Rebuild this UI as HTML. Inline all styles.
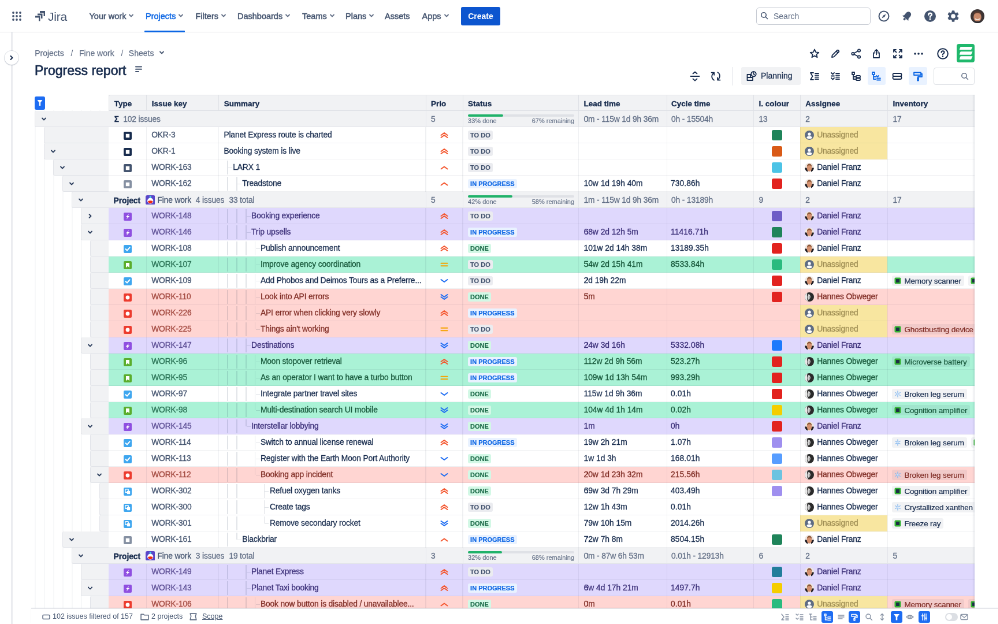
<!DOCTYPE html><html><head><meta charset="utf-8"><title>Progress report</title><style>
*{box-sizing:border-box}
html,body{margin:0;padding:0;width:998px;height:624px;overflow:hidden;background:#fff}
#root{will-change:transform;position:absolute;left:0;top:0;width:1728px;height:1080px;transform:scale(0.5777);transform-origin:0 0;font-family:"Liberation Sans",sans-serif;color:#172b4d;font-size:14px;overflow:hidden;background:#fff}
.a{position:absolute}
.t{position:absolute;white-space:nowrap;line-height:28px;font-size:13.8px;letter-spacing:-0.15px;-webkit-text-stroke:0.3px currentColor}
.lz{display:inline-block;font-size:11px;font-weight:bold;line-height:16px;height:16px;padding:0 4px;border-radius:3px;vertical-align:middle;-webkit-text-stroke:0.2px currentColor}
.nav{position:absolute;top:0;height:56px;line-height:57px;font-size:14.5px;color:#44546f;white-space:nowrap;-webkit-text-stroke:0.5px currentColor}
.ic{position:absolute;display:block}
</style></head><body><div id="root">
<div class="a" style="left:0;top:55px;width:1728px;height:1px;background:#dcdfe4"></div>
<svg class="ic" style="left:21px;top:19.5px" width="16" height="16" viewBox="0 0 16 16"><circle cx="2" cy="2" r="1.9" fill="#44546f"/><circle cx="2" cy="8" r="1.9" fill="#44546f"/><circle cx="2" cy="14" r="1.9" fill="#44546f"/><circle cx="8" cy="2" r="1.9" fill="#44546f"/><circle cx="8" cy="8" r="1.9" fill="#44546f"/><circle cx="8" cy="14" r="1.9" fill="#44546f"/><circle cx="14" cy="2" r="1.9" fill="#44546f"/><circle cx="14" cy="8" r="1.9" fill="#44546f"/><circle cx="14" cy="14" r="1.9" fill="#44546f"/></svg>
<svg class="ic" style="left:60px;top:18px" width="19" height="20" viewBox="0 0 19 20"><g fill="#44546f"><path d="M9 1 H18 V10 L15.5 10 V4.5 L9 4.5 Z"/><path d="M5 5.5 H13.5 V14 L11 14 V8.5 L5 8.5 Z"/><path d="M1 9.5 H9.5 V18.5 L7 18.5 V12.5 L1 12.5 Z"/></g></svg>
<div class="a" style="left:83px;top:0;height:56px;line-height:57px;font-size:21px;color:#44546f;letter-spacing:-0.2px">Jira</div>
<div class="nav" style="left:154.5px;color:#44546f">Your work<span style="display:inline-block;vertical-align:middle;margin-left:3px;position:relative;top:-1px"><svg width="12" height="12" viewBox="0 0 12 12"><path d="M3 4.5 L6 7.5 L9 4.5" fill="none" stroke="#626f86" stroke-width="1.8" stroke-linecap="round" stroke-linejoin="round"/></svg></span></div>
<div class="nav" style="left:252px;color:#0c66e4">Projects<span style="display:inline-block;vertical-align:middle;margin-left:3px;position:relative;top:-1px"><svg width="12" height="12" viewBox="0 0 12 12"><path d="M3 4.5 L6 7.5 L9 4.5" fill="none" stroke="#626f86" stroke-width="1.8" stroke-linecap="round" stroke-linejoin="round"/></svg></span></div>
<div class="nav" style="left:338.5px;color:#44546f">Filters<span style="display:inline-block;vertical-align:middle;margin-left:3px;position:relative;top:-1px"><svg width="12" height="12" viewBox="0 0 12 12"><path d="M3 4.5 L6 7.5 L9 4.5" fill="none" stroke="#626f86" stroke-width="1.8" stroke-linecap="round" stroke-linejoin="round"/></svg></span></div>
<div class="nav" style="left:411px;color:#44546f">Dashboards<span style="display:inline-block;vertical-align:middle;margin-left:3px;position:relative;top:-1px"><svg width="12" height="12" viewBox="0 0 12 12"><path d="M3 4.5 L6 7.5 L9 4.5" fill="none" stroke="#626f86" stroke-width="1.8" stroke-linecap="round" stroke-linejoin="round"/></svg></span></div>
<div class="nav" style="left:523px;color:#44546f">Teams<span style="display:inline-block;vertical-align:middle;margin-left:3px;position:relative;top:-1px"><svg width="12" height="12" viewBox="0 0 12 12"><path d="M3 4.5 L6 7.5 L9 4.5" fill="none" stroke="#626f86" stroke-width="1.8" stroke-linecap="round" stroke-linejoin="round"/></svg></span></div>
<div class="nav" style="left:598px;color:#44546f">Plans<span style="display:inline-block;vertical-align:middle;margin-left:3px;position:relative;top:-1px"><svg width="12" height="12" viewBox="0 0 12 12"><path d="M3 4.5 L6 7.5 L9 4.5" fill="none" stroke="#626f86" stroke-width="1.8" stroke-linecap="round" stroke-linejoin="round"/></svg></span></div>
<div class="nav" style="left:666px;color:#44546f">Assets<span style="display:inline-block;vertical-align:middle;margin-left:3px;position:relative;top:-1px"></span></div>
<div class="nav" style="left:730.5px;color:#44546f">Apps<span style="display:inline-block;vertical-align:middle;margin-left:3px;position:relative;top:-1px"><svg width="12" height="12" viewBox="0 0 12 12"><path d="M3 4.5 L6 7.5 L9 4.5" fill="none" stroke="#626f86" stroke-width="1.8" stroke-linecap="round" stroke-linejoin="round"/></svg></span></div>
<div class="a" style="left:250px;top:52.5px;width:70px;height:3.5px;background:#0c66e4;border-radius:1px"></div>
<div class="a" style="left:798px;top:12px;width:68px;height:32px;background:#0c55cf;border-radius:3px;color:#fff;font-weight:bold;font-size:14px;line-height:32px;text-align:center">Create</div>
<div class="a" style="left:1309px;top:12.5px;width:198px;height:30px;border:1.5px solid #c8ccd4;border-radius:5px;background:#fff"></div>
<svg class="ic" style="left:1316px;top:20px" width="14" height="14" viewBox="0 0 14 14"><circle cx="6" cy="6" r="4.2" fill="none" stroke="#44546f" stroke-width="1.6"/><path d="M9.2 9.2 L12.5 12.5" stroke="#44546f" stroke-width="1.6" stroke-linecap="round"/></svg>
<div class="a" style="left:1339px;top:12px;line-height:32px;font-size:14px;color:#626f86">Search</div>
<svg class="ic" style="left:1519px;top:17px" width="22" height="22" viewBox="0 0 22 22"><circle cx="11" cy="11" r="8.5" fill="none" stroke="#44546f" stroke-width="2"/><path d="M14.5 7.5 L12.3 12.3 L7.5 14.5 L9.7 9.7 Z" fill="#44546f"/></svg>
<svg class="ic" style="left:1559px;top:17px" width="22" height="22" viewBox="0 0 22 22"><g transform="rotate(40 11 11)" fill="#44546f"><path d="M11 2.5 C7.6 2.5 6.2 5.2 6.2 8.6 V12.6 L4.2 15.6 H17.8 L15.8 12.6 V8.6 C15.8 5.2 14.4 2.5 11 2.5 Z"/><circle cx="11" cy="17.8" r="2"/></g></svg>
<svg class="ic" style="left:1599px;top:17px" width="22" height="22" viewBox="0 0 22 22"><circle cx="11" cy="11" r="10" fill="#44546f"/><path d="M8.2 8.6 Q8.3 5.8 11 5.8 Q13.8 5.8 13.8 8.3 Q13.8 10 11.8 10.9 Q11 11.3 11 12.6" fill="none" stroke="#fff" stroke-width="2.6" stroke-linecap="round"/><circle cx="11" cy="16" r="1.6" fill="#fff"/></svg>
<svg class="ic" style="left:1639px;top:17px" width="22" height="22" viewBox="0 0 22 22"><g fill="#44546f"><rect x="8.6" y="1.2" width="4.8" height="5" rx="1" transform="rotate(0 11 11)"/><rect x="8.6" y="1.2" width="4.8" height="5" rx="1" transform="rotate(60 11 11)"/><rect x="8.6" y="1.2" width="4.8" height="5" rx="1" transform="rotate(120 11 11)"/><rect x="8.6" y="1.2" width="4.8" height="5" rx="1" transform="rotate(180 11 11)"/><rect x="8.6" y="1.2" width="4.8" height="5" rx="1" transform="rotate(240 11 11)"/><rect x="8.6" y="1.2" width="4.8" height="5" rx="1" transform="rotate(300 11 11)"/><circle cx="11" cy="11" r="7.3"/></g><circle cx="11" cy="11" r="3.8" fill="#fff"/></svg>
<svg class="ic" style="left:1680px;top:15.5px" width="24" height="24" viewBox="0 0 24 24"><defs><clipPath id="avc"><circle cx="12" cy="12" r="12"/></clipPath></defs><g clip-path="url(#avc)"><rect width="24" height="24" fill="#3d3434"/><ellipse cx="12" cy="13.5" rx="6.8" ry="8" fill="#c98a6b"/><path d="M4.8 9.5 Q5.5 3.5 12 3.5 Q18.5 3.5 19.2 9.5 Q16 6.5 12 6.8 Q8 6.5 4.8 9.5Z" fill="#5b3b2e"/><path d="M8 16.5 Q12 19.5 16 16.5" stroke="#f3e6de" stroke-width="1.6" fill="none"/><rect x="0" y="21" width="24" height="3" fill="#2a2a30"/></g></svg>
<div class="a" style="left:19.2px;top:56px;width:3.2px;height:1024px;background:#ebecf0"></div>
<div class="a" style="left:8px;top:87.5px;width:24px;height:24px;border-radius:50%;background:#fff;box-shadow:0 0 0 1px rgba(9,30,66,0.1),0 1px 2px rgba(9,30,66,0.2)"></div>
<svg class="ic" style="left:14px;top:93.5px" width="12" height="12" viewBox="0 0 12 12"><path d="M4.5 3 L7.5 6 L4.5 9" fill="none" stroke="#172b4d" stroke-width="2" stroke-linecap="round" stroke-linejoin="round"/></svg>
<div class="a" style="left:60.2px;top:77.7px;line-height:28px;font-size:14px;color:#626f86;white-space:nowrap;-webkit-text-stroke:0.25px #626f86">Projects</div>
<div class="a" style="left:122.5px;top:77.7px;line-height:28px;font-size:14px;color:#626f86">/</div>
<div class="a" style="left:137px;top:77.7px;line-height:28px;font-size:14px;color:#626f86;white-space:nowrap;-webkit-text-stroke:0.25px #626f86">Fine work</div>
<div class="a" style="left:209.5px;top:77.7px;line-height:28px;font-size:14px;color:#626f86">/</div>
<div class="a" style="left:222.8px;top:77.7px;line-height:28px;font-size:14px;color:#626f86;white-space:nowrap;-webkit-text-stroke:0.25px #626f86">Sheets</div>
<svg class="ic" style="left:274px;top:85px" width="12" height="12" viewBox="0 0 12 12"><path d="M3 4.5 L6 7.5 L9 4.5" fill="none" stroke="#44546f" stroke-width="1.8" stroke-linecap="round" stroke-linejoin="round"/></svg>
<div class="a" style="left:60px;top:106px;line-height:32px;font-size:23px;color:#172b4d;white-space:nowrap;-webkit-text-stroke:0.7px #172b4d">Progress report</div>
<svg class="ic" style="left:234px;top:114px" width="13" height="12" viewBox="0 0 13 12"><g fill="#44546f"><rect x="0" y="0.5" width="12" height="2" rx="1"/><rect x="0" y="4.7" width="12" height="2" rx="1"/><rect x="0" y="8.9" width="7" height="2" rx="1"/></g></svg>
<svg class="ic" style="left:1399.6px;top:82.6px" width="20" height="20" viewBox="0 0 20 20"><path d="M10 2.5 L12.2 7.3 L17.3 7.8 L13.4 11.2 L14.6 16.3 L10 13.6 L5.4 16.3 L6.6 11.2 L2.7 7.8 L7.8 7.3 Z" fill="none" stroke="#172b4d" stroke-width="1.8" stroke-linecap="round" stroke-linejoin="round"/></svg>
<svg class="ic" style="left:1435.9px;top:82.6px" width="20" height="20" viewBox="0 0 20 20"><path d="M4 16 L4.6 12.6 L13 4.2 Q14.2 3 15.4 4.2 L15.8 4.6 Q17 5.8 15.8 7 L7.4 15.4 Z M11.6 5.6 L14.4 8.4" fill="none" stroke="#172b4d" stroke-width="1.8" stroke-linecap="round" stroke-linejoin="round"/></svg>
<svg class="ic" style="left:1471.8px;top:82.6px" width="20" height="20" viewBox="0 0 20 20"><circle cx="15" cy="4.5" r="2.2" fill="none" stroke="#172b4d" stroke-width="1.8" stroke-linecap="round" stroke-linejoin="round"/><circle cx="15" cy="15.5" r="2.2" fill="none" stroke="#172b4d" stroke-width="1.8" stroke-linecap="round" stroke-linejoin="round"/><circle cx="4.5" cy="10" r="2.2" fill="none" stroke="#172b4d" stroke-width="1.8" stroke-linecap="round" stroke-linejoin="round"/><path d="M6.5 9 L13 5.5 M6.5 11 L13 14.5" fill="none" stroke="#172b4d" stroke-width="1.8" stroke-linecap="round" stroke-linejoin="round"/></svg>
<svg class="ic" style="left:1507.0px;top:82.6px" width="20" height="20" viewBox="0 0 20 20"><path d="M10 11.5 V2.8 M7 5.8 L10 2.8 L13 5.8 M7.5 8.5 H5 V17 H15 V8.5 H12.5" fill="none" stroke="#172b4d" stroke-width="1.8" stroke-linecap="round" stroke-linejoin="round"/></svg>
<svg class="ic" style="left:1543.8px;top:82.6px" width="20" height="20" viewBox="0 0 20 20"><path d="M3 7 V3 H7 M13 3 H17 V7 M17 13 V17 H13 M7 17 H3 V13 M3.5 3.5 L7.5 7.5 M16.5 3.5 L12.5 7.5 M16.5 16.5 L12.5 12.5 M3.5 16.5 L7.5 12.5" fill="none" stroke="#172b4d" stroke-width="1.8" stroke-linecap="round" stroke-linejoin="round"/></svg>
<svg class="ic" style="left:1580.0px;top:82.6px" width="20" height="20" viewBox="0 0 20 20"><circle cx="4" cy="10" r="1.8" fill="#172b4d"/><circle cx="10" cy="10" r="1.8" fill="#172b4d"/><circle cx="16" cy="10" r="1.8" fill="#172b4d"/></svg>
<svg class="ic" style="left:1620.5px;top:81.6px" width="22" height="22" viewBox="0 0 20 20"><circle cx="10" cy="10" r="8" fill="none" stroke="#172b4d" stroke-width="1.8" stroke-linecap="round" stroke-linejoin="round"/><path d="M7.7 8 Q7.8 5.6 10 5.6 Q12.3 5.6 12.3 7.7 Q12.3 9.2 10.6 9.9 Q10 10.2 10 11.5" fill="none" stroke="#172b4d" stroke-width="1.8" stroke-linecap="round" stroke-linejoin="round"/><circle cx="10" cy="14.3" r="1.1" fill="#172b4d"/></svg>
<div class="a" style="left:1656px;top:76.2px;width:31px;height:32px;background:#1fb86c;border-radius:4px"></div>
<svg class="ic" style="left:1656px;top:76.2px" width="31" height="32" viewBox="0 0 31 32"><g fill="#fff"><path d="M7.5 5 H27.5 L25 10.2 H5.5 Q4.5 10.2 5 9 L6.2 6 Q6.6 5 7.5 5Z"/><path d="M7.5 13.3 H27.5 L25 18.7 H5.5 Q4.5 18.7 5 17.5 L6.2 14.3 Q6.6 13.3 7.5 13.3Z"/><path d="M7.5 21.3 H27.5 L25 27 H5.5 Q4.5 27 5 25.8 L6.2 22.3 Q6.6 21.3 7.5 21.3Z"/></g></svg>
<svg class="ic" style="left:1192.5px;top:122.1px" width="20" height="20" viewBox="0 0 20 20"><path d="M2.5 10 H17.5 M6.5 5.5 L10 2.5 L13.5 5.5 M6.5 14.5 L10 17.5 L13.5 14.5" fill="none" stroke="#172b4d" stroke-width="1.8" stroke-linecap="round" stroke-linejoin="round"/></svg>
<svg class="ic" style="left:1228.9px;top:122.1px" width="20" height="20" viewBox="0 0 20 20"><path d="M6.6 4.2 Q3 7 3.2 11 Q3.6 14.6 7 16.8 M2.6 3.6 H7.2 V7.8 M13.4 3.2 Q17 5.4 16.9 9.6 Q16.7 13.6 13.2 16.2 M13 12.4 V16.6 H17.6" fill="none" stroke="#172b4d" stroke-width="1.8" stroke-linecap="round" stroke-linejoin="round"/></svg>
<div class="a" style="left:1267.5px;top:116px;width:1.5px;height:31.5px;background:#dcdfe4"></div>
<div class="a" style="left:1283px;top:116px;width:102.5px;height:31px;background:#f1f2f4;border-radius:3px"></div>
<svg class="ic" style="left:1290.7px;top:122.1px" width="20" height="20" viewBox="0 0 20 20"><path d="M2.5 7 H8 V12 H2.5 Z M2.5 12 V17 H12 V12 H8 M13.5 1.8 A4.3 4.3 0 1 1 13.49 1.8 M13.5 4 V6.3 L15 7.3" fill="none" stroke="#172b4d" stroke-width="1.8" stroke-linecap="round" stroke-linejoin="round"/></svg>
<div class="a" style="left:1317px;top:116px;line-height:31px;font-size:14px;color:#172b4d;-webkit-text-stroke:0.3px #172b4d">Planning</div>
<svg class="ic" style="left:1399.6px;top:122.1px" width="20" height="20" viewBox="0 0 20 20"><path d="M8 4 H3 L6.5 10 L3 16 H8 M11 5 H17 M11 8.3 H17 M11 11.6 H17 M11 15 H17" fill="none" stroke="#172b4d" stroke-width="1.8" stroke-linecap="round" stroke-linejoin="round"/></svg>
<svg class="ic" style="left:1435.9px;top:122.1px" width="20" height="20" viewBox="0 0 20 20"><path d="M3 4 L5.5 6.5 L8 4 M3 13 L5.5 15.5 L8 13 M3 9.5 H8 M11 5 H17 M11 8.3 H17 M11 11.6 H17 M11 15 H17" fill="none" stroke="#172b4d" stroke-width="1.8" stroke-linecap="round" stroke-linejoin="round"/></svg>
<svg class="ic" style="left:1471.8px;top:122.1px" width="20" height="20" viewBox="0 0 20 20"><path d="M3 3 H7 V7 H3 Z M5 7 V15 H9 M5 11 H9" fill="none" stroke="#172b4d" stroke-width="1.8" stroke-linecap="round" stroke-linejoin="round"/><rect x="10" y="9" width="7" height="3.5" rx="1" fill="none" stroke="#172b4d" stroke-width="1.8" stroke-linecap="round" stroke-linejoin="round"/><rect x="10" y="13.5" width="7" height="3.5" rx="1" fill="none" stroke="#172b4d" stroke-width="1.8" stroke-linecap="round" stroke-linejoin="round"/></svg>
<div class="a" style="left:1501.6px;top:116.3px;width:31.4px;height:31.2px;background:#e9f2ff;border-radius:3px"></div>
<svg class="ic" style="left:1507.0px;top:122.1px" width="20" height="20" viewBox="0 0 20 20"><path d="M3 3 H7 V7 H3 Z M5 7 V15 H9 M5 11 H9 M10 9 L12 11 L14 9 M11 13.5 H17 M11 16.5 H17" fill="none" stroke="#0c66e4" stroke-width="1.8" stroke-linecap="round" stroke-linejoin="round"/></svg>
<svg class="ic" style="left:1543.0px;top:122.1px" width="20" height="20" viewBox="0 0 20 20"><rect x="2.5" y="5" width="15" height="5" rx="2" fill="none" stroke="#172b4d" stroke-width="1.8" stroke-linecap="round" stroke-linejoin="round"/><rect x="2.5" y="10" width="15" height="5" rx="2" fill="none" stroke="#172b4d" stroke-width="1.8" stroke-linecap="round" stroke-linejoin="round"/></svg>
<div class="a" style="left:1573px;top:116.3px;width:31.6px;height:31.2px;background:#e9f2ff;border-radius:3px"></div>
<svg class="ic" style="left:1579.0px;top:122.1px" width="20" height="20" viewBox="0 0 20 20"><path d="M3 3.5 H15 V8 H3 Z M15 5.7 H17 V11 H10 V13 M9 13 H11 V17.5 H9 Z" fill="none" stroke="#0c66e4" stroke-width="1.8" stroke-linecap="round" stroke-linejoin="round"/></svg>
<div class="a" style="left:1615.6px;top:116.7px;width:71.4px;height:30.8px;border:1.5px solid #dcdfe4;border-radius:4px;background:#fff"></div>
<svg class="ic" style="left:1663px;top:125px" width="14" height="14" viewBox="0 0 14 14"><circle cx="6" cy="6" r="4.2" fill="none" stroke="#626f86" stroke-width="1.5"/><path d="M9.2 9.2 L12.5 12.5" stroke="#626f86" stroke-width="1.5" stroke-linecap="round"/></svg>
<div class="a" style="left:60.2px;top:166.5px;width:17.8px;height:23px;background:#1d6cf2;border-radius:3px"></div>
<svg class="ic" style="left:63px;top:171px" width="12" height="14" viewBox="0 0 12 14"><path d="M1.5 2 H10.5 L7.2 6.5 V12 H4.8 V6.5 Z" fill="#fff"/></svg>
<div class="a" style="left:59.5px;top:191px;width:2.5px;height:862px;background:#f7f8f9"></div>
<div class="a" style="left:75.5px;top:191px;width:2.5px;height:862px;background:#f7f8f9"></div>
<div class="a" style="left:91.5px;top:191px;width:2.5px;height:862px;background:#f7f8f9"></div>
<div class="a" style="left:107.5px;top:191px;width:2.5px;height:862px;background:#f7f8f9"></div>
<div class="a" style="left:123.5px;top:191px;width:2.5px;height:862px;background:#f7f8f9"></div>
<div class="a" style="left:139.5px;top:191px;width:2.5px;height:862px;background:#f7f8f9"></div>
<div class="a" style="left:155.5px;top:191px;width:2.5px;height:862px;background:#f7f8f9"></div>
<div class="a" style="left:171.5px;top:191px;width:2.5px;height:862px;background:#f7f8f9"></div>
<div class="a" style="left:188.3px;top:164.4px;width:1498.9px;height:27.69999999999999px;background:#f1f2f4;border-top:1px solid #e1e3e8;border-left:1px solid #e1e3e8;border-bottom:1px solid #dcdfe4;border-top-left-radius:3px"></div>
<div class="a" style="left:188.3px;top:164.4px;width:1px;height:27.69999999999999px;background:#dfe1e6"></div>
<div class="t" style="left:197.8px;top:165.9px;line-height:28.69999999999999px;font-size:13.5px;letter-spacing:0;font-weight:bold;color:#172b4d">Type</div>
<div class="a" style="left:253.2px;top:164.4px;width:1px;height:27.69999999999999px;background:#dfe1e6"></div>
<div class="t" style="left:262.7px;top:165.9px;line-height:28.69999999999999px;font-size:13.5px;letter-spacing:0;font-weight:bold;color:#172b4d">Issue key</div>
<div class="a" style="left:378.2px;top:164.4px;width:1px;height:27.69999999999999px;background:#dfe1e6"></div>
<div class="t" style="left:387.7px;top:165.9px;line-height:28.69999999999999px;font-size:13.5px;letter-spacing:0;font-weight:bold;color:#172b4d">Summary</div>
<div class="a" style="left:736.5px;top:164.4px;width:1px;height:27.69999999999999px;background:#dfe1e6"></div>
<div class="t" style="left:746.0px;top:165.9px;line-height:28.69999999999999px;font-size:13.5px;letter-spacing:0;font-weight:bold;color:#172b4d">Prio</div>
<div class="a" style="left:800.6px;top:164.4px;width:1px;height:27.69999999999999px;background:#dfe1e6"></div>
<div class="t" style="left:810.1px;top:165.9px;line-height:28.69999999999999px;font-size:13.5px;letter-spacing:0;font-weight:bold;color:#172b4d">Status</div>
<div class="a" style="left:1001.0px;top:164.4px;width:1px;height:27.69999999999999px;background:#dfe1e6"></div>
<div class="t" style="left:1010.5px;top:165.9px;line-height:28.69999999999999px;font-size:13.5px;letter-spacing:0;font-weight:bold;color:#172b4d">Lead time</div>
<div class="a" style="left:1154.2px;top:164.4px;width:1px;height:27.69999999999999px;background:#dfe1e6"></div>
<div class="t" style="left:1162.0px;top:165.9px;line-height:28.69999999999999px;font-size:13.5px;letter-spacing:0;font-weight:bold;color:#172b4d">Cycle time</div>
<div class="a" style="left:1304.0px;top:164.4px;width:1px;height:27.69999999999999px;background:#dfe1e6"></div>
<div class="t" style="left:1313.5px;top:165.9px;line-height:28.69999999999999px;font-size:13.5px;letter-spacing:0;font-weight:bold;color:#172b4d">I. colour</div>
<div class="a" style="left:1384.8px;top:164.4px;width:1px;height:27.69999999999999px;background:#dfe1e6"></div>
<div class="t" style="left:1394.3px;top:165.9px;line-height:28.69999999999999px;font-size:13.5px;letter-spacing:0;font-weight:bold;color:#172b4d">Assignee</div>
<div class="a" style="left:1536.1px;top:164.4px;width:1px;height:27.69999999999999px;background:#dfe1e6"></div>
<div class="t" style="left:1545.6px;top:165.9px;line-height:28.69999999999999px;font-size:13.5px;letter-spacing:0;font-weight:bold;color:#172b4d">Inventory</div>
<div class="a" style="left:60px;top:192.1px;width:129.3px;height:28.0px;background:#f1f2f4;border:1px solid #e2e4e9;border-right:none;border-top:none;border-radius:3px 0 0 3px"></div>
<div class="ic" style="left:70px;top:199.29999999999998px"><svg width="12" height="12" viewBox="0 0 12 12"><path d="M3 4.5 L6 7.5 L9 4.5" fill="none" stroke="#2c3e5d" stroke-width="1.8" stroke-linecap="round" stroke-linejoin="round"/></svg></div>
<div class="a" style="left:188.3px;top:192.1px;width:1498.9px;height:28.0px;background:#f1f2f4;border-bottom:1px solid #e2e4e9"></div>
<div class="a" style="left:736.5px;top:192.1px;width:1px;height:28.0px;background:#e2e4e9"></div>
<div class="a" style="left:800.6px;top:192.1px;width:1px;height:28.0px;background:#e2e4e9"></div>
<div class="a" style="left:1001.0px;top:192.1px;width:1px;height:28.0px;background:#e2e4e9"></div>
<div class="a" style="left:1154.2px;top:192.1px;width:1px;height:28.0px;background:#e2e4e9"></div>
<div class="a" style="left:1304.0px;top:192.1px;width:1px;height:28.0px;background:#e2e4e9"></div>
<div class="a" style="left:1384.8px;top:192.1px;width:1px;height:28.0px;background:#e2e4e9"></div>
<div class="a" style="left:1536.1px;top:192.1px;width:1px;height:28.0px;background:#e2e4e9"></div>
<div class="t" style="left:197.8px;top:193.29999999999998px;font-weight:bold;color:#172b4d">&Sigma;</div>
<div class="t" style="left:213.3px;top:193.29999999999998px;color:#626f86">102 issues</div>
<div class="t" style="left:746.0px;top:192.9px;color:#626f86">5</div>
<div class="a" style="left:810.1px;top:198.2px;width:184px;height:3.4px;background:#dfe1e6;border-radius:2px"></div>
<div class="a" style="left:810.1px;top:198.2px;width:60.7px;height:3.4px;background:#20b26a;border-radius:2px"></div>
<div class="a" style="left:810.1px;top:201.4px;line-height:16px;font-size:11px;color:#626f86;white-space:nowrap;-webkit-text-stroke:0.15px #626f86">33% done</div>
<div class="a" style="left:810.1px;top:201.4px;width:184px;text-align:right;line-height:16px;font-size:11px;color:#626f86;white-space:nowrap;-webkit-text-stroke:0.15px #626f86">67% remaining</div>
<div class="t" style="left:1010.5px;top:192.9px;color:#626f86">0m - 115w 1d 9h 36m</div>
<div class="t" style="left:1162.0px;top:192.9px;color:#626f86">0h - 15504h</div>
<div class="t" style="left:1313.5px;top:192.9px;color:#626f86">13</div>
<div class="t" style="left:1394.3px;top:192.9px;color:#626f86">2</div>
<div class="t" style="left:1545.6px;top:192.9px;color:#626f86">17</div>
<div class="a" style="left:76px;top:220.1px;width:113.30000000000001px;height:28.0px;background:#f1f2f4;border:1px solid #e2e4e9;border-right:none;border-top:none;border-radius:3px 0 0 3px"></div>
<div class="a" style="left:188.3px;top:220.1px;width:1498.9px;height:28.0px;background:#ffffff"></div>
<div class="a" style="left:1384.8px;top:220.1px;width:151.29999999999995px;height:28.0px;background:#f8e6a0"></div>
<div class="a" style="left:188.3px;top:246.79999999999998px;width:1498.9px;height:1.6px;background:rgba(9,30,66,0.065)"></div>
<div class="a" style="left:252.89999999999998px;top:220.1px;width:1.6px;height:28.0px;background:rgba(9,30,66,0.065)"></div>
<div class="a" style="left:377.9px;top:220.1px;width:1.6px;height:28.0px;background:rgba(9,30,66,0.065)"></div>
<div class="a" style="left:736.2px;top:220.1px;width:1.6px;height:28.0px;background:rgba(9,30,66,0.065)"></div>
<div class="a" style="left:800.3000000000001px;top:220.1px;width:1.6px;height:28.0px;background:rgba(9,30,66,0.065)"></div>
<div class="a" style="left:1000.7px;top:220.1px;width:1.6px;height:28.0px;background:rgba(9,30,66,0.065)"></div>
<div class="a" style="left:1153.9px;top:220.1px;width:1.6px;height:28.0px;background:rgba(9,30,66,0.065)"></div>
<div class="a" style="left:1303.7px;top:220.1px;width:1.6px;height:28.0px;background:rgba(9,30,66,0.065)"></div>
<div class="a" style="left:1384.5px;top:220.1px;width:1.6px;height:28.0px;background:rgba(9,30,66,0.065)"></div>
<div class="a" style="left:1535.8px;top:220.1px;width:1.6px;height:28.0px;background:rgba(9,30,66,0.065)"></div>
<div class="ic" style="left:213.8px;top:227.6px"><svg width="14" height="14" viewBox="0 0 14 14"><rect x="0" y="0" width="14" height="14" rx="2" fill="#172b4d"/><rect x="3.8" y="3.8" width="6.4" height="6.4" fill="#fff"/></svg></div>
<div class="t" style="left:262.2px;top:220.0px;color:#44546f">OKR-3</div>
<div class="t" style="left:387.4px;top:220.0px;color:#172b4d">Planet Express route is charted</div>
<div class="ic" style="left:760.7px;top:225.7px"><svg width="16" height="16" viewBox="0 0 16 16"><path d="M2.5 8 L8 4 L13.5 8 M2.5 12 L8 8 L13.5 12" stroke="#f4572f" fill="none" stroke-width="2.1" stroke-linecap="round" stroke-linejoin="round"/></svg></div>
<div class="a" style="left:810.1px;top:225.1px;line-height:16px"><span class="lz" style="background:#ebecf0;color:#44546f">TO DO</span></div>
<div class="a" style="left:1336px;top:225.29999999999998px;width:17.5px;height:17.5px;background:#1f845a;border-radius:3px"></div>
<div class="ic" style="left:1393.4px;top:226.1px"><svg width="16" height="16" viewBox="0 0 16 16"><circle cx="8" cy="8" r="8" fill="#5e6c84"/><circle cx="8" cy="6.2" r="2.6" fill="#fff"/><path d="M3.2 12.8 Q3.6 9.4 8 9.4 Q12.4 9.4 12.8 12.8 Q10.8 14.6 8 14.6 Q5.2 14.6 3.2 12.8Z" fill="#fff"/></svg></div>
<div class="t" style="left:1414.2px;top:220.0px;color:#a08f55">Unassigned</div>
<div class="a" style="left:76px;top:248.1px;width:113.30000000000001px;height:28.0px;background:#f1f2f4;border:1px solid #e2e4e9;border-right:none;border-top:none;border-radius:3px 0 0 3px"></div>
<div class="ic" style="left:86px;top:255.29999999999998px"><svg width="12" height="12" viewBox="0 0 12 12"><path d="M3 4.5 L6 7.5 L9 4.5" fill="none" stroke="#2c3e5d" stroke-width="1.8" stroke-linecap="round" stroke-linejoin="round"/></svg></div>
<div class="a" style="left:188.3px;top:248.1px;width:1498.9px;height:28.0px;background:#ffffff"></div>
<div class="a" style="left:1384.8px;top:248.1px;width:151.29999999999995px;height:28.0px;background:#f8e6a0"></div>
<div class="a" style="left:188.3px;top:274.8px;width:1498.9px;height:1.6px;background:rgba(9,30,66,0.065)"></div>
<div class="a" style="left:252.89999999999998px;top:248.1px;width:1.6px;height:28.0px;background:rgba(9,30,66,0.065)"></div>
<div class="a" style="left:377.9px;top:248.1px;width:1.6px;height:28.0px;background:rgba(9,30,66,0.065)"></div>
<div class="a" style="left:736.2px;top:248.1px;width:1.6px;height:28.0px;background:rgba(9,30,66,0.065)"></div>
<div class="a" style="left:800.3000000000001px;top:248.1px;width:1.6px;height:28.0px;background:rgba(9,30,66,0.065)"></div>
<div class="a" style="left:1000.7px;top:248.1px;width:1.6px;height:28.0px;background:rgba(9,30,66,0.065)"></div>
<div class="a" style="left:1153.9px;top:248.1px;width:1.6px;height:28.0px;background:rgba(9,30,66,0.065)"></div>
<div class="a" style="left:1303.7px;top:248.1px;width:1.6px;height:28.0px;background:rgba(9,30,66,0.065)"></div>
<div class="a" style="left:1384.5px;top:248.1px;width:1.6px;height:28.0px;background:rgba(9,30,66,0.065)"></div>
<div class="a" style="left:1535.8px;top:248.1px;width:1.6px;height:28.0px;background:rgba(9,30,66,0.065)"></div>
<div class="ic" style="left:213.8px;top:255.6px"><svg width="14" height="14" viewBox="0 0 14 14"><rect x="0" y="0" width="14" height="14" rx="2" fill="#172b4d"/><rect x="3.8" y="3.8" width="6.4" height="6.4" fill="#fff"/></svg></div>
<div class="t" style="left:262.2px;top:248.0px;color:#44546f">OKR-1</div>
<div class="t" style="left:387.4px;top:248.0px;color:#172b4d">Booking system is live</div>
<div class="ic" style="left:760.7px;top:253.7px"><svg width="16" height="16" viewBox="0 0 16 16"><path d="M2.5 8 L8 4 L13.5 8 M2.5 12 L8 8 L13.5 12" stroke="#f4572f" fill="none" stroke-width="2.1" stroke-linecap="round" stroke-linejoin="round"/></svg></div>
<div class="a" style="left:810.1px;top:253.1px;line-height:16px"><span class="lz" style="background:#ebecf0;color:#44546f">TO DO</span></div>
<div class="a" style="left:1336px;top:253.29999999999998px;width:17.5px;height:17.5px;background:#d95a17;border-radius:3px"></div>
<div class="ic" style="left:1393.4px;top:254.1px"><svg width="16" height="16" viewBox="0 0 16 16"><circle cx="8" cy="8" r="8" fill="#5e6c84"/><circle cx="8" cy="6.2" r="2.6" fill="#fff"/><path d="M3.2 12.8 Q3.6 9.4 8 9.4 Q12.4 9.4 12.8 12.8 Q10.8 14.6 8 14.6 Q5.2 14.6 3.2 12.8Z" fill="#fff"/></svg></div>
<div class="t" style="left:1414.2px;top:248.0px;color:#a08f55">Unassigned</div>
<div class="a" style="left:92px;top:276.1px;width:97.30000000000001px;height:28.0px;background:#f1f2f4;border:1px solid #e2e4e9;border-right:none;border-top:none;border-radius:3px 0 0 3px"></div>
<div class="ic" style="left:102px;top:283.3px"><svg width="12" height="12" viewBox="0 0 12 12"><path d="M3 4.5 L6 7.5 L9 4.5" fill="none" stroke="#2c3e5d" stroke-width="1.8" stroke-linecap="round" stroke-linejoin="round"/></svg></div>
<div class="a" style="left:188.3px;top:276.1px;width:1498.9px;height:28.0px;background:#ffffff"></div>
<div class="a" style="left:188.3px;top:302.8px;width:1498.9px;height:1.6px;background:rgba(9,30,66,0.065)"></div>
<div class="a" style="left:252.89999999999998px;top:276.1px;width:1.6px;height:28.0px;background:rgba(9,30,66,0.065)"></div>
<div class="a" style="left:377.9px;top:276.1px;width:1.6px;height:28.0px;background:rgba(9,30,66,0.065)"></div>
<div class="a" style="left:736.2px;top:276.1px;width:1.6px;height:28.0px;background:rgba(9,30,66,0.065)"></div>
<div class="a" style="left:800.3000000000001px;top:276.1px;width:1.6px;height:28.0px;background:rgba(9,30,66,0.065)"></div>
<div class="a" style="left:1000.7px;top:276.1px;width:1.6px;height:28.0px;background:rgba(9,30,66,0.065)"></div>
<div class="a" style="left:1153.9px;top:276.1px;width:1.6px;height:28.0px;background:rgba(9,30,66,0.065)"></div>
<div class="a" style="left:1303.7px;top:276.1px;width:1.6px;height:28.0px;background:rgba(9,30,66,0.065)"></div>
<div class="a" style="left:1384.5px;top:276.1px;width:1.6px;height:28.0px;background:rgba(9,30,66,0.065)"></div>
<div class="a" style="left:1535.8px;top:276.1px;width:1.6px;height:28.0px;background:rgba(9,30,66,0.065)"></div>
<div class="ic" style="left:213.8px;top:283.6px"><svg width="14" height="14" viewBox="0 0 14 14"><rect x="0" y="0" width="14" height="14" rx="2" fill="#44546f"/><rect x="3.8" y="3.8" width="6.4" height="6.4" fill="#fff"/></svg></div>
<div class="t" style="left:262.2px;top:276.0px;color:#44546f">WORK-163</div>
<div class="a" style="left:393.1px;top:278.1px;width:1.7px;height:24.0px;background:rgba(9,30,66,0.12)"></div>
<div class="a" style="left:394.8px;top:289.70000000000005px;width:7px;height:1.7px;background:rgba(9,30,66,0.12)"></div>
<div class="t" style="left:403.29999999999995px;top:276.0px;color:#172b4d">LARX 1</div>
<div class="ic" style="left:760.7px;top:281.70000000000005px"><svg width="16" height="16" viewBox="0 0 16 16"><path d="M2.5 10.5 L8 6.5 L13.5 10.5" stroke="#f4572f" fill="none" stroke-width="2.1" stroke-linecap="round" stroke-linejoin="round"/></svg></div>
<div class="a" style="left:810.1px;top:281.1px;line-height:16px"><span class="lz" style="background:#ebecf0;color:#44546f">TO DO</span></div>
<div class="a" style="left:1336px;top:281.3px;width:17.5px;height:17.5px;background:#4cc3e6;border-radius:3px"></div>
<div class="ic" style="left:1393.4px;top:282.1px"><svg width="16" height="16" viewBox="0 0 16 16"><defs><clipPath id="cdf"><circle cx="8" cy="8" r="8"/></clipPath></defs><g clip-path="url(#cdf)"><rect width="16" height="16" fill="#efe6e0"/><path d="M0 9 Q3 7 5 11 L5 16 L0 16Z M16 9 Q13 7 11 11 L11 16 L16 16Z" fill="#1c1b22"/><ellipse cx="8" cy="8.6" rx="4.4" ry="6" fill="#d4916f"/><path d="M3.8 6.5 Q4.2 1.6 8 1.6 Q11.8 1.6 12.2 6.5 Q10.5 4 8 4.2 Q5.5 4 3.8 6.5Z" fill="#8a5636"/></g></svg></div>
<div class="t" style="left:1414.2px;top:276.0px;color:#172b4d">Daniel Franz</div>
<div class="a" style="left:108px;top:304.1px;width:81.30000000000001px;height:28.0px;background:#f1f2f4;border:1px solid #e2e4e9;border-right:none;border-top:none;border-radius:3px 0 0 3px"></div>
<div class="ic" style="left:118px;top:311.3px"><svg width="12" height="12" viewBox="0 0 12 12"><path d="M3 4.5 L6 7.5 L9 4.5" fill="none" stroke="#2c3e5d" stroke-width="1.8" stroke-linecap="round" stroke-linejoin="round"/></svg></div>
<div class="a" style="left:188.3px;top:304.1px;width:1498.9px;height:28.0px;background:#ffffff"></div>
<div class="a" style="left:188.3px;top:330.8px;width:1498.9px;height:1.6px;background:rgba(9,30,66,0.065)"></div>
<div class="a" style="left:252.89999999999998px;top:304.1px;width:1.6px;height:28.0px;background:rgba(9,30,66,0.065)"></div>
<div class="a" style="left:377.9px;top:304.1px;width:1.6px;height:28.0px;background:rgba(9,30,66,0.065)"></div>
<div class="a" style="left:736.2px;top:304.1px;width:1.6px;height:28.0px;background:rgba(9,30,66,0.065)"></div>
<div class="a" style="left:800.3000000000001px;top:304.1px;width:1.6px;height:28.0px;background:rgba(9,30,66,0.065)"></div>
<div class="a" style="left:1000.7px;top:304.1px;width:1.6px;height:28.0px;background:rgba(9,30,66,0.065)"></div>
<div class="a" style="left:1153.9px;top:304.1px;width:1.6px;height:28.0px;background:rgba(9,30,66,0.065)"></div>
<div class="a" style="left:1303.7px;top:304.1px;width:1.6px;height:28.0px;background:rgba(9,30,66,0.065)"></div>
<div class="a" style="left:1384.5px;top:304.1px;width:1.6px;height:28.0px;background:rgba(9,30,66,0.065)"></div>
<div class="a" style="left:1535.8px;top:304.1px;width:1.6px;height:28.0px;background:rgba(9,30,66,0.065)"></div>
<div class="ic" style="left:213.8px;top:311.6px"><svg width="14" height="14" viewBox="0 0 14 14"><rect x="0" y="0" width="14" height="14" rx="2" fill="#8590a2"/><rect x="3.8" y="3.8" width="6.4" height="6.4" fill="#fff"/></svg></div>
<div class="t" style="left:262.2px;top:304.0px;color:#44546f">WORK-162</div>
<div class="a" style="left:393.1px;top:306.1px;width:1.7px;height:24.0px;background:rgba(9,30,66,0.12)"></div>
<div class="a" style="left:409.0px;top:306.1px;width:1.7px;height:24.0px;background:rgba(9,30,66,0.12)"></div>
<div class="a" style="left:410.7px;top:317.70000000000005px;width:7px;height:1.7px;background:rgba(9,30,66,0.12)"></div>
<div class="t" style="left:419.2px;top:304.0px;color:#172b4d">Treadstone</div>
<div class="ic" style="left:760.7px;top:309.70000000000005px"><svg width="16" height="16" viewBox="0 0 16 16"><path d="M2.5 10.5 L8 6.5 L13.5 10.5" stroke="#f4572f" fill="none" stroke-width="2.1" stroke-linecap="round" stroke-linejoin="round"/></svg></div>
<div class="a" style="left:810.1px;top:309.1px;line-height:16px"><span class="lz" style="background:#e9f2ff;color:#0c66e4">IN PROGRESS</span></div>
<div class="t" style="left:1010.5px;top:304.0px;letter-spacing:0px;color:#172b4d">10w 1d 19h 40m</div>
<div class="t" style="left:1161.0px;top:304.0px;letter-spacing:0.1px;color:#172b4d">730.86h</div>
<div class="a" style="left:1336px;top:309.3px;width:17.5px;height:17.5px;background:#e2231f;border-radius:3px"></div>
<div class="ic" style="left:1393.4px;top:310.1px"><svg width="16" height="16" viewBox="0 0 16 16"><defs><clipPath id="cdf"><circle cx="8" cy="8" r="8"/></clipPath></defs><g clip-path="url(#cdf)"><rect width="16" height="16" fill="#efe6e0"/><path d="M0 9 Q3 7 5 11 L5 16 L0 16Z M16 9 Q13 7 11 11 L11 16 L16 16Z" fill="#1c1b22"/><ellipse cx="8" cy="8.6" rx="4.4" ry="6" fill="#d4916f"/><path d="M3.8 6.5 Q4.2 1.6 8 1.6 Q11.8 1.6 12.2 6.5 Q10.5 4 8 4.2 Q5.5 4 3.8 6.5Z" fill="#8a5636"/></g></svg></div>
<div class="t" style="left:1414.2px;top:304.0px;color:#172b4d">Daniel Franz</div>
<div class="a" style="left:124px;top:332.1px;width:65.30000000000001px;height:28.0px;background:#f1f2f4;border:1px solid #e2e4e9;border-right:none;border-top:none;border-radius:3px 0 0 3px"></div>
<div class="ic" style="left:134px;top:339.3px"><svg width="12" height="12" viewBox="0 0 12 12"><path d="M3 4.5 L6 7.5 L9 4.5" fill="none" stroke="#2c3e5d" stroke-width="1.8" stroke-linecap="round" stroke-linejoin="round"/></svg></div>
<div class="a" style="left:188.3px;top:332.1px;width:1498.9px;height:28.0px;background:#f1f2f4;border-bottom:1px solid #e2e4e9"></div>
<div class="a" style="left:736.5px;top:332.1px;width:1px;height:28.0px;background:#e2e4e9"></div>
<div class="a" style="left:800.6px;top:332.1px;width:1px;height:28.0px;background:#e2e4e9"></div>
<div class="a" style="left:1001.0px;top:332.1px;width:1px;height:28.0px;background:#e2e4e9"></div>
<div class="a" style="left:1154.2px;top:332.1px;width:1px;height:28.0px;background:#e2e4e9"></div>
<div class="a" style="left:1304.0px;top:332.1px;width:1px;height:28.0px;background:#e2e4e9"></div>
<div class="a" style="left:1384.8px;top:332.1px;width:1px;height:28.0px;background:#e2e4e9"></div>
<div class="a" style="left:1536.1px;top:332.1px;width:1px;height:28.0px;background:#e2e4e9"></div>
<div class="t" style="left:196.6px;top:333.3px;font-weight:bold;font-size:14px;color:#172b4d">Project</div>
<svg class="ic" style="left:251.7px;top:337.90000000000003px" width="16.5" height="16.5" viewBox="0 0 16 16"><rect width="16" height="16" rx="3" fill="#5a46c8"/><rect x="6.6" y="1.5" width="2.8" height="3" fill="#3fe3f0"/><circle cx="8" cy="9.4" r="4.9" fill="#fff"/><path d="M4 9.8 Q8 8.2 12 9.8 A4 4 0 0 1 4 9.8Z" fill="#f2280f"/></svg>
<div class="t" style="left:272.5px;top:333.3px;color:#44546f">Fine work</div>
<div class="t" style="left:338.8px;top:333.3px;color:#626f86">4 issues</div>
<div class="t" style="left:396.4px;top:333.3px;color:#626f86">33 total</div>
<div class="t" style="left:746.0px;top:332.90000000000003px;color:#626f86">5</div>
<div class="a" style="left:810.1px;top:338.20000000000005px;width:184px;height:3.4px;background:#dfe1e6;border-radius:2px"></div>
<div class="a" style="left:810.1px;top:338.20000000000005px;width:77.3px;height:3.4px;background:#20b26a;border-radius:2px"></div>
<div class="a" style="left:810.1px;top:341.40000000000003px;line-height:16px;font-size:11px;color:#626f86;white-space:nowrap;-webkit-text-stroke:0.15px #626f86">42% done</div>
<div class="a" style="left:810.1px;top:341.40000000000003px;width:184px;text-align:right;line-height:16px;font-size:11px;color:#626f86;white-space:nowrap;-webkit-text-stroke:0.15px #626f86">58% remaining</div>
<div class="t" style="left:1010.5px;top:332.90000000000003px;color:#626f86">1m - 115w 1d 9h 36m</div>
<div class="t" style="left:1162.0px;top:332.90000000000003px;color:#626f86">0h - 13189h</div>
<div class="t" style="left:1313.5px;top:332.90000000000003px;color:#626f86">9</div>
<div class="t" style="left:1394.3px;top:332.90000000000003px;color:#626f86">2</div>
<div class="t" style="left:1545.6px;top:332.90000000000003px;color:#626f86">17</div>
<div class="a" style="left:140px;top:360.1px;width:49.30000000000001px;height:28.0px;background:#f1f2f4;border:1px solid #e2e4e9;border-right:none;border-top:none;border-radius:3px 0 0 3px"></div>
<div class="ic" style="left:150px;top:367.3px"><svg width="12" height="12" viewBox="0 0 12 12"><path d="M4.5 3 L7.5 6 L4.5 9" fill="none" stroke="#2c3e5d" stroke-width="1.8" stroke-linecap="round" stroke-linejoin="round"/></svg></div>
<div class="a" style="left:188.3px;top:360.1px;width:1498.9px;height:28.0px;background:#dfd8fd"></div>
<div class="a" style="left:188.3px;top:386.8px;width:1498.9px;height:1.6px;background:rgba(9,30,66,0.065)"></div>
<div class="a" style="left:252.89999999999998px;top:360.1px;width:1.6px;height:28.0px;background:rgba(9,30,66,0.065)"></div>
<div class="a" style="left:377.9px;top:360.1px;width:1.6px;height:28.0px;background:rgba(9,30,66,0.065)"></div>
<div class="a" style="left:736.2px;top:360.1px;width:1.6px;height:28.0px;background:rgba(9,30,66,0.065)"></div>
<div class="a" style="left:800.3000000000001px;top:360.1px;width:1.6px;height:28.0px;background:rgba(9,30,66,0.065)"></div>
<div class="a" style="left:1000.7px;top:360.1px;width:1.6px;height:28.0px;background:rgba(9,30,66,0.065)"></div>
<div class="a" style="left:1153.9px;top:360.1px;width:1.6px;height:28.0px;background:rgba(9,30,66,0.065)"></div>
<div class="a" style="left:1303.7px;top:360.1px;width:1.6px;height:28.0px;background:rgba(9,30,66,0.065)"></div>
<div class="a" style="left:1384.5px;top:360.1px;width:1.6px;height:28.0px;background:rgba(9,30,66,0.065)"></div>
<div class="a" style="left:1535.8px;top:360.1px;width:1.6px;height:28.0px;background:rgba(9,30,66,0.065)"></div>
<div class="ic" style="left:213.8px;top:367.6px"><svg width="14" height="14" viewBox="0 0 14 14"><rect width="14" height="14" rx="2" fill="#8f4fe0"/><path d="M9.2 2.2 L3.6 7.9 H6.6 L4.8 11.8 L10.4 6.1 H7.4 Z" fill="#fff"/></svg></div>
<div class="t" style="left:262.2px;top:360.0px;color:#5f5196">WORK-148</div>
<div class="a" style="left:393.1px;top:362.1px;width:1.7px;height:24.0px;background:rgba(9,30,66,0.12)"></div>
<div class="a" style="left:409.0px;top:362.1px;width:1.7px;height:24.0px;background:rgba(9,30,66,0.12)"></div>
<div class="a" style="left:424.90000000000003px;top:362.1px;width:1.7px;height:24.0px;background:rgba(9,30,66,0.12)"></div>
<div class="a" style="left:426.6px;top:373.70000000000005px;width:7px;height:1.7px;background:rgba(9,30,66,0.12)"></div>
<div class="t" style="left:435.09999999999997px;top:360.0px;color:#3b2f78">Booking experience</div>
<div class="ic" style="left:760.7px;top:365.70000000000005px"><svg width="16" height="16" viewBox="0 0 16 16"><path d="M2.5 8 L8 4 L13.5 8 M2.5 12 L8 8 L13.5 12" stroke="#f4572f" fill="none" stroke-width="2.1" stroke-linecap="round" stroke-linejoin="round"/></svg></div>
<div class="a" style="left:810.1px;top:365.1px;line-height:16px"><span class="lz" style="background:#ebecf0;color:#44546f">TO DO</span></div>
<div class="a" style="left:1336px;top:365.3px;width:17.5px;height:17.5px;background:#6e5dc6;border-radius:3px"></div>
<div class="ic" style="left:1393.4px;top:366.1px"><svg width="16" height="16" viewBox="0 0 16 16"><defs><clipPath id="cdf"><circle cx="8" cy="8" r="8"/></clipPath></defs><g clip-path="url(#cdf)"><rect width="16" height="16" fill="#efe6e0"/><path d="M0 9 Q3 7 5 11 L5 16 L0 16Z M16 9 Q13 7 11 11 L11 16 L16 16Z" fill="#1c1b22"/><ellipse cx="8" cy="8.6" rx="4.4" ry="6" fill="#d4916f"/><path d="M3.8 6.5 Q4.2 1.6 8 1.6 Q11.8 1.6 12.2 6.5 Q10.5 4 8 4.2 Q5.5 4 3.8 6.5Z" fill="#8a5636"/></g></svg></div>
<div class="t" style="left:1414.2px;top:360.0px;color:#3b2f78">Daniel Franz</div>
<div class="a" style="left:140px;top:388.1px;width:49.30000000000001px;height:28.0px;background:#f1f2f4;border:1px solid #e2e4e9;border-right:none;border-top:none;border-radius:3px 0 0 3px"></div>
<div class="ic" style="left:150px;top:395.3px"><svg width="12" height="12" viewBox="0 0 12 12"><path d="M3 4.5 L6 7.5 L9 4.5" fill="none" stroke="#2c3e5d" stroke-width="1.8" stroke-linecap="round" stroke-linejoin="round"/></svg></div>
<div class="a" style="left:188.3px;top:388.1px;width:1498.9px;height:28.0px;background:#dfd8fd"></div>
<div class="a" style="left:188.3px;top:414.8px;width:1498.9px;height:1.6px;background:rgba(9,30,66,0.065)"></div>
<div class="a" style="left:252.89999999999998px;top:388.1px;width:1.6px;height:28.0px;background:rgba(9,30,66,0.065)"></div>
<div class="a" style="left:377.9px;top:388.1px;width:1.6px;height:28.0px;background:rgba(9,30,66,0.065)"></div>
<div class="a" style="left:736.2px;top:388.1px;width:1.6px;height:28.0px;background:rgba(9,30,66,0.065)"></div>
<div class="a" style="left:800.3000000000001px;top:388.1px;width:1.6px;height:28.0px;background:rgba(9,30,66,0.065)"></div>
<div class="a" style="left:1000.7px;top:388.1px;width:1.6px;height:28.0px;background:rgba(9,30,66,0.065)"></div>
<div class="a" style="left:1153.9px;top:388.1px;width:1.6px;height:28.0px;background:rgba(9,30,66,0.065)"></div>
<div class="a" style="left:1303.7px;top:388.1px;width:1.6px;height:28.0px;background:rgba(9,30,66,0.065)"></div>
<div class="a" style="left:1384.5px;top:388.1px;width:1.6px;height:28.0px;background:rgba(9,30,66,0.065)"></div>
<div class="a" style="left:1535.8px;top:388.1px;width:1.6px;height:28.0px;background:rgba(9,30,66,0.065)"></div>
<div class="ic" style="left:213.8px;top:395.6px"><svg width="14" height="14" viewBox="0 0 14 14"><rect width="14" height="14" rx="2" fill="#8f4fe0"/><path d="M9.2 2.2 L3.6 7.9 H6.6 L4.8 11.8 L10.4 6.1 H7.4 Z" fill="#fff"/></svg></div>
<div class="t" style="left:262.2px;top:388.0px;color:#5f5196">WORK-146</div>
<div class="a" style="left:393.1px;top:390.1px;width:1.7px;height:24.0px;background:rgba(9,30,66,0.12)"></div>
<div class="a" style="left:409.0px;top:390.1px;width:1.7px;height:24.0px;background:rgba(9,30,66,0.12)"></div>
<div class="a" style="left:424.90000000000003px;top:390.1px;width:1.7px;height:24.0px;background:rgba(9,30,66,0.12)"></div>
<div class="a" style="left:426.6px;top:401.70000000000005px;width:7px;height:1.7px;background:rgba(9,30,66,0.12)"></div>
<div class="t" style="left:435.09999999999997px;top:388.0px;color:#3b2f78">Trip upsells</div>
<div class="ic" style="left:760.7px;top:393.70000000000005px"><svg width="16" height="16" viewBox="0 0 16 16"><path d="M2.5 8 L8 4 L13.5 8 M2.5 12 L8 8 L13.5 12" stroke="#f4572f" fill="none" stroke-width="2.1" stroke-linecap="round" stroke-linejoin="round"/></svg></div>
<div class="a" style="left:810.1px;top:393.1px;line-height:16px"><span class="lz" style="background:#e9f2ff;color:#0c66e4">IN PROGRESS</span></div>
<div class="t" style="left:1010.5px;top:388.0px;letter-spacing:0px;color:#3b2f78">68w 2d 12h 5m</div>
<div class="t" style="left:1161.0px;top:388.0px;letter-spacing:0.1px;color:#3b2f78">11416.71h</div>
<div class="a" style="left:1336px;top:393.3px;width:17.5px;height:17.5px;background:#1f845a;border-radius:3px"></div>
<div class="ic" style="left:1393.4px;top:394.1px"><svg width="16" height="16" viewBox="0 0 16 16"><defs><clipPath id="cdf"><circle cx="8" cy="8" r="8"/></clipPath></defs><g clip-path="url(#cdf)"><rect width="16" height="16" fill="#efe6e0"/><path d="M0 9 Q3 7 5 11 L5 16 L0 16Z M16 9 Q13 7 11 11 L11 16 L16 16Z" fill="#1c1b22"/><ellipse cx="8" cy="8.6" rx="4.4" ry="6" fill="#d4916f"/><path d="M3.8 6.5 Q4.2 1.6 8 1.6 Q11.8 1.6 12.2 6.5 Q10.5 4 8 4.2 Q5.5 4 3.8 6.5Z" fill="#8a5636"/></g></svg></div>
<div class="t" style="left:1414.2px;top:388.0px;color:#3b2f78">Daniel Franz</div>
<div class="a" style="left:156px;top:416.1px;width:33.30000000000001px;height:28.0px;background:#f1f2f4;border:1px solid #e2e4e9;border-right:none;border-top:none;border-radius:3px 0 0 3px"></div>
<div class="a" style="left:188.3px;top:416.1px;width:1498.9px;height:28.0px;background:#ffffff"></div>
<div class="a" style="left:188.3px;top:442.8px;width:1498.9px;height:1.6px;background:rgba(9,30,66,0.065)"></div>
<div class="a" style="left:252.89999999999998px;top:416.1px;width:1.6px;height:28.0px;background:rgba(9,30,66,0.065)"></div>
<div class="a" style="left:377.9px;top:416.1px;width:1.6px;height:28.0px;background:rgba(9,30,66,0.065)"></div>
<div class="a" style="left:736.2px;top:416.1px;width:1.6px;height:28.0px;background:rgba(9,30,66,0.065)"></div>
<div class="a" style="left:800.3000000000001px;top:416.1px;width:1.6px;height:28.0px;background:rgba(9,30,66,0.065)"></div>
<div class="a" style="left:1000.7px;top:416.1px;width:1.6px;height:28.0px;background:rgba(9,30,66,0.065)"></div>
<div class="a" style="left:1153.9px;top:416.1px;width:1.6px;height:28.0px;background:rgba(9,30,66,0.065)"></div>
<div class="a" style="left:1303.7px;top:416.1px;width:1.6px;height:28.0px;background:rgba(9,30,66,0.065)"></div>
<div class="a" style="left:1384.5px;top:416.1px;width:1.6px;height:28.0px;background:rgba(9,30,66,0.065)"></div>
<div class="a" style="left:1535.8px;top:416.1px;width:1.6px;height:28.0px;background:rgba(9,30,66,0.065)"></div>
<div class="ic" style="left:213.8px;top:423.6px"><svg width="14" height="14" viewBox="0 0 14 14"><rect width="14" height="14" rx="2" fill="#3ea6ef"/><path d="M3.5 7.2 L6 9.6 L10.5 4.4" fill="none" stroke="#fff" stroke-width="2.1" stroke-linecap="round" stroke-linejoin="round"/></svg></div>
<div class="t" style="left:262.2px;top:416.0px;color:#44546f">WORK-108</div>
<div class="a" style="left:393.1px;top:418.1px;width:1.7px;height:24.0px;background:rgba(9,30,66,0.12)"></div>
<div class="a" style="left:409.0px;top:418.1px;width:1.7px;height:24.0px;background:rgba(9,30,66,0.12)"></div>
<div class="a" style="left:424.90000000000003px;top:418.1px;width:1.7px;height:24.0px;background:rgba(9,30,66,0.12)"></div>
<div class="a" style="left:440.8px;top:418.1px;width:1.7px;height:24.0px;background:rgba(9,30,66,0.12)"></div>
<div class="a" style="left:442.5px;top:429.70000000000005px;width:7px;height:1.7px;background:rgba(9,30,66,0.12)"></div>
<div class="t" style="left:451.0px;top:416.0px;color:#172b4d">Publish announcement</div>
<div class="ic" style="left:760.7px;top:421.70000000000005px"><svg width="16" height="16" viewBox="0 0 16 16"><path d="M2.5 8 L8 4 L13.5 8 M2.5 12 L8 8 L13.5 12" stroke="#f4572f" fill="none" stroke-width="2.1" stroke-linecap="round" stroke-linejoin="round"/></svg></div>
<div class="a" style="left:810.1px;top:421.1px;line-height:16px"><span class="lz" style="background:#d3f8e6;color:#1c6b49">DONE</span></div>
<div class="t" style="left:1010.5px;top:416.0px;letter-spacing:0px;color:#172b4d">101w 2d 14h 38m</div>
<div class="t" style="left:1161.0px;top:416.0px;letter-spacing:0.1px;color:#172b4d">13189.35h</div>
<div class="a" style="left:1336px;top:421.3px;width:17.5px;height:17.5px;background:#e2231f;border-radius:3px"></div>
<div class="ic" style="left:1393.4px;top:422.1px"><svg width="16" height="16" viewBox="0 0 16 16"><defs><clipPath id="cdf"><circle cx="8" cy="8" r="8"/></clipPath></defs><g clip-path="url(#cdf)"><rect width="16" height="16" fill="#efe6e0"/><path d="M0 9 Q3 7 5 11 L5 16 L0 16Z M16 9 Q13 7 11 11 L11 16 L16 16Z" fill="#1c1b22"/><ellipse cx="8" cy="8.6" rx="4.4" ry="6" fill="#d4916f"/><path d="M3.8 6.5 Q4.2 1.6 8 1.6 Q11.8 1.6 12.2 6.5 Q10.5 4 8 4.2 Q5.5 4 3.8 6.5Z" fill="#8a5636"/></g></svg></div>
<div class="t" style="left:1414.2px;top:416.0px;color:#172b4d">Daniel Franz</div>
<div class="a" style="left:156px;top:444.1px;width:33.30000000000001px;height:28.0px;background:#f1f2f4;border:1px solid #e2e4e9;border-right:none;border-top:none;border-radius:3px 0 0 3px"></div>
<div class="a" style="left:188.3px;top:444.1px;width:1498.9px;height:28.0px;background:#aaf2d6"></div>
<div class="a" style="left:1384.8px;top:444.1px;width:151.29999999999995px;height:28.0px;background:#f8e6a0"></div>
<div class="a" style="left:188.3px;top:470.8px;width:1498.9px;height:1.6px;background:rgba(9,30,66,0.065)"></div>
<div class="a" style="left:252.89999999999998px;top:444.1px;width:1.6px;height:28.0px;background:rgba(9,30,66,0.065)"></div>
<div class="a" style="left:377.9px;top:444.1px;width:1.6px;height:28.0px;background:rgba(9,30,66,0.065)"></div>
<div class="a" style="left:736.2px;top:444.1px;width:1.6px;height:28.0px;background:rgba(9,30,66,0.065)"></div>
<div class="a" style="left:800.3000000000001px;top:444.1px;width:1.6px;height:28.0px;background:rgba(9,30,66,0.065)"></div>
<div class="a" style="left:1000.7px;top:444.1px;width:1.6px;height:28.0px;background:rgba(9,30,66,0.065)"></div>
<div class="a" style="left:1153.9px;top:444.1px;width:1.6px;height:28.0px;background:rgba(9,30,66,0.065)"></div>
<div class="a" style="left:1303.7px;top:444.1px;width:1.6px;height:28.0px;background:rgba(9,30,66,0.065)"></div>
<div class="a" style="left:1384.5px;top:444.1px;width:1.6px;height:28.0px;background:rgba(9,30,66,0.065)"></div>
<div class="a" style="left:1535.8px;top:444.1px;width:1.6px;height:28.0px;background:rgba(9,30,66,0.065)"></div>
<div class="ic" style="left:213.8px;top:451.6px"><svg width="14" height="14" viewBox="0 0 14 14"><rect width="14" height="14" rx="2" fill="#5aad2c"/><path d="M4 3 H10 V11.3 L7 8.8 L4 11.3 Z" fill="#fff"/></svg></div>
<div class="t" style="left:262.2px;top:444.0px;color:#2b7356">WORK-107</div>
<div class="a" style="left:393.1px;top:446.1px;width:1.7px;height:24.0px;background:rgba(9,30,66,0.12)"></div>
<div class="a" style="left:409.0px;top:446.1px;width:1.7px;height:24.0px;background:rgba(9,30,66,0.12)"></div>
<div class="a" style="left:424.90000000000003px;top:446.1px;width:1.7px;height:24.0px;background:rgba(9,30,66,0.12)"></div>
<div class="a" style="left:440.8px;top:446.1px;width:1.7px;height:24.0px;background:rgba(9,30,66,0.12)"></div>
<div class="a" style="left:442.5px;top:457.70000000000005px;width:7px;height:1.7px;background:rgba(9,30,66,0.12)"></div>
<div class="t" style="left:451.0px;top:444.0px;color:#17573a">Improve agency coordination</div>
<div class="ic" style="left:760.7px;top:449.70000000000005px"><svg width="16" height="16" viewBox="0 0 16 16"><path d="M2.5 5.8 H13.5 M2.5 10.2 H13.5" stroke="#f5a300" fill="none" stroke-width="2.1" stroke-linecap="round" stroke-linejoin="round"/></svg></div>
<div class="a" style="left:810.1px;top:449.1px;line-height:16px"><span class="lz" style="background:#ebecf0;color:#44546f">TO DO</span></div>
<div class="t" style="left:1010.5px;top:444.0px;letter-spacing:0px;color:#17573a">54w 2d 15h 41m</div>
<div class="t" style="left:1161.0px;top:444.0px;letter-spacing:0.1px;color:#17573a">8533.84h</div>
<div class="a" style="left:1336px;top:449.3px;width:17.5px;height:17.5px;background:#2abb7f;border-radius:3px"></div>
<div class="ic" style="left:1393.4px;top:450.1px"><svg width="16" height="16" viewBox="0 0 16 16"><circle cx="8" cy="8" r="8" fill="#5e6c84"/><circle cx="8" cy="6.2" r="2.6" fill="#fff"/><path d="M3.2 12.8 Q3.6 9.4 8 9.4 Q12.4 9.4 12.8 12.8 Q10.8 14.6 8 14.6 Q5.2 14.6 3.2 12.8Z" fill="#fff"/></svg></div>
<div class="t" style="left:1414.2px;top:444.0px;color:#a08f55">Unassigned</div>
<div class="a" style="left:156px;top:472.1px;width:33.30000000000001px;height:28.0px;background:#f1f2f4;border:1px solid #e2e4e9;border-right:none;border-top:none;border-radius:3px 0 0 3px"></div>
<div class="a" style="left:188.3px;top:472.1px;width:1498.9px;height:28.0px;background:#ffffff"></div>
<div class="a" style="left:188.3px;top:498.8px;width:1498.9px;height:1.6px;background:rgba(9,30,66,0.065)"></div>
<div class="a" style="left:252.89999999999998px;top:472.1px;width:1.6px;height:28.0px;background:rgba(9,30,66,0.065)"></div>
<div class="a" style="left:377.9px;top:472.1px;width:1.6px;height:28.0px;background:rgba(9,30,66,0.065)"></div>
<div class="a" style="left:736.2px;top:472.1px;width:1.6px;height:28.0px;background:rgba(9,30,66,0.065)"></div>
<div class="a" style="left:800.3000000000001px;top:472.1px;width:1.6px;height:28.0px;background:rgba(9,30,66,0.065)"></div>
<div class="a" style="left:1000.7px;top:472.1px;width:1.6px;height:28.0px;background:rgba(9,30,66,0.065)"></div>
<div class="a" style="left:1153.9px;top:472.1px;width:1.6px;height:28.0px;background:rgba(9,30,66,0.065)"></div>
<div class="a" style="left:1303.7px;top:472.1px;width:1.6px;height:28.0px;background:rgba(9,30,66,0.065)"></div>
<div class="a" style="left:1384.5px;top:472.1px;width:1.6px;height:28.0px;background:rgba(9,30,66,0.065)"></div>
<div class="a" style="left:1535.8px;top:472.1px;width:1.6px;height:28.0px;background:rgba(9,30,66,0.065)"></div>
<div class="ic" style="left:213.8px;top:479.6px"><svg width="14" height="14" viewBox="0 0 14 14"><rect width="14" height="14" rx="2" fill="#3ea6ef"/><path d="M3.5 7.2 L6 9.6 L10.5 4.4" fill="none" stroke="#fff" stroke-width="2.1" stroke-linecap="round" stroke-linejoin="round"/></svg></div>
<div class="t" style="left:262.2px;top:472.0px;color:#44546f">WORK-109</div>
<div class="a" style="left:393.1px;top:474.1px;width:1.7px;height:24.0px;background:rgba(9,30,66,0.12)"></div>
<div class="a" style="left:409.0px;top:474.1px;width:1.7px;height:24.0px;background:rgba(9,30,66,0.12)"></div>
<div class="a" style="left:424.90000000000003px;top:474.1px;width:1.7px;height:24.0px;background:rgba(9,30,66,0.12)"></div>
<div class="a" style="left:440.8px;top:474.1px;width:1.7px;height:24.0px;background:rgba(9,30,66,0.12)"></div>
<div class="a" style="left:442.5px;top:485.70000000000005px;width:7px;height:1.7px;background:rgba(9,30,66,0.12)"></div>
<div class="t" style="left:451.0px;top:472.0px;color:#172b4d">Add Phobos and Deimos Tours as a Preferre...</div>
<div class="ic" style="left:760.7px;top:477.70000000000005px"><svg width="16" height="16" viewBox="0 0 16 16"><path d="M2.5 6 L8 10 L13.5 6" stroke="#1d6cf2" fill="none" stroke-width="2.1" stroke-linecap="round" stroke-linejoin="round"/></svg></div>
<div class="a" style="left:810.1px;top:477.1px;line-height:16px"><span class="lz" style="background:#ebecf0;color:#44546f">TO DO</span></div>
<div class="t" style="left:1010.5px;top:472.0px;letter-spacing:0px;color:#172b4d">2d 19h 22m</div>
<div class="a" style="left:1336px;top:477.3px;width:17.5px;height:17.5px;background:#e2231f;border-radius:3px"></div>
<div class="ic" style="left:1393.4px;top:478.1px"><svg width="16" height="16" viewBox="0 0 16 16"><defs><clipPath id="cdf"><circle cx="8" cy="8" r="8"/></clipPath></defs><g clip-path="url(#cdf)"><rect width="16" height="16" fill="#efe6e0"/><path d="M0 9 Q3 7 5 11 L5 16 L0 16Z M16 9 Q13 7 11 11 L11 16 L16 16Z" fill="#1c1b22"/><ellipse cx="8" cy="8.6" rx="4.4" ry="6" fill="#d4916f"/><path d="M3.8 6.5 Q4.2 1.6 8 1.6 Q11.8 1.6 12.2 6.5 Q10.5 4 8 4.2 Q5.5 4 3.8 6.5Z" fill="#8a5636"/></g></svg></div>
<div class="t" style="left:1414.2px;top:472.0px;color:#172b4d">Daniel Franz</div>
<div class="a" style="left:1544.4px;top:477.3px;width:142.79999999999995px;height:18px;overflow:hidden;white-space:nowrap;font-size:14px;display:flex"><span style="display:inline-flex;align-items:center;height:17.5px;padding:0 5px 0 4px;margin-right:7px;background:rgba(9,30,66,0.06);border-radius:3px;white-space:nowrap;color:#172b4d;font-size:13.5px;letter-spacing:-0.15px;-webkit-text-stroke:0.2px currentColor"><span style="display:block;width:12px;height:12px;margin-right:5px"><svg width="12" height="12" viewBox="0 0 12 12" style="display:block"><rect x="0.5" y="0.5" width="11" height="11" rx="2" fill="#34b233"/><rect x="3" y="3" width="6" height="6" fill="#1d2f45"/></svg></span>Memory scanner</span><span style="display:inline-flex;align-items:center;height:17.5px;padding:0 5px 0 4px;margin-right:7px;background:rgba(9,30,66,0.06);border-radius:3px;white-space:nowrap;color:#172b4d;font-size:13.5px;letter-spacing:-0.15px;-webkit-text-stroke:0.2px currentColor"><span style="display:block;width:12px;height:12px;margin-right:5px"><svg width="12" height="12" viewBox="0 0 12 12" style="display:block"><rect x="0.5" y="0.5" width="11" height="11" rx="2" fill="#34b233"/><rect x="3" y="3" width="6" height="6" fill="#1d2f45"/></svg></span></span></div>
<div class="a" style="left:156px;top:500.1px;width:33.30000000000001px;height:28.0px;background:#f1f2f4;border:1px solid #e2e4e9;border-right:none;border-top:none;border-radius:3px 0 0 3px"></div>
<div class="a" style="left:188.3px;top:500.1px;width:1498.9px;height:28.0px;background:#ffd5d2"></div>
<div class="a" style="left:188.3px;top:526.8000000000001px;width:1498.9px;height:1.6px;background:rgba(9,30,66,0.065)"></div>
<div class="a" style="left:252.89999999999998px;top:500.1px;width:1.6px;height:28.0px;background:rgba(9,30,66,0.065)"></div>
<div class="a" style="left:377.9px;top:500.1px;width:1.6px;height:28.0px;background:rgba(9,30,66,0.065)"></div>
<div class="a" style="left:736.2px;top:500.1px;width:1.6px;height:28.0px;background:rgba(9,30,66,0.065)"></div>
<div class="a" style="left:800.3000000000001px;top:500.1px;width:1.6px;height:28.0px;background:rgba(9,30,66,0.065)"></div>
<div class="a" style="left:1000.7px;top:500.1px;width:1.6px;height:28.0px;background:rgba(9,30,66,0.065)"></div>
<div class="a" style="left:1153.9px;top:500.1px;width:1.6px;height:28.0px;background:rgba(9,30,66,0.065)"></div>
<div class="a" style="left:1303.7px;top:500.1px;width:1.6px;height:28.0px;background:rgba(9,30,66,0.065)"></div>
<div class="a" style="left:1384.5px;top:500.1px;width:1.6px;height:28.0px;background:rgba(9,30,66,0.065)"></div>
<div class="a" style="left:1535.8px;top:500.1px;width:1.6px;height:28.0px;background:rgba(9,30,66,0.065)"></div>
<div class="ic" style="left:213.8px;top:507.6px"><svg width="14" height="14" viewBox="0 0 14 14"><rect width="14" height="14" rx="2" fill="#ec3b2e"/><circle cx="7" cy="7" r="3.4" fill="#fff"/></svg></div>
<div class="t" style="left:262.2px;top:500.0px;color:#a34a40">WORK-110</div>
<div class="a" style="left:393.1px;top:502.1px;width:1.7px;height:24.0px;background:rgba(9,30,66,0.12)"></div>
<div class="a" style="left:409.0px;top:502.1px;width:1.7px;height:24.0px;background:rgba(9,30,66,0.12)"></div>
<div class="a" style="left:424.90000000000003px;top:502.1px;width:1.7px;height:24.0px;background:rgba(9,30,66,0.12)"></div>
<div class="a" style="left:440.8px;top:502.1px;width:1.7px;height:24.0px;background:rgba(9,30,66,0.12)"></div>
<div class="a" style="left:442.5px;top:513.7px;width:7px;height:1.7px;background:rgba(9,30,66,0.12)"></div>
<div class="t" style="left:451.0px;top:500.0px;color:#7f2c24">Look into API errors</div>
<div class="ic" style="left:760.7px;top:505.70000000000005px"><svg width="16" height="16" viewBox="0 0 16 16"><path d="M2.5 4 L8 8 L13.5 4 M2.5 8 L8 12 L13.5 8" stroke="#1d6cf2" fill="none" stroke-width="2.1" stroke-linecap="round" stroke-linejoin="round"/></svg></div>
<div class="a" style="left:810.1px;top:505.1px;line-height:16px"><span class="lz" style="background:#d3f8e6;color:#1c6b49">DONE</span></div>
<div class="t" style="left:1010.5px;top:500.0px;letter-spacing:0px;color:#7f2c24">5m</div>
<div class="a" style="left:1336px;top:505.3px;width:17.5px;height:17.5px;background:#e2231f;border-radius:3px"></div>
<div class="ic" style="left:1393.4px;top:506.1px"><svg width="16" height="16" viewBox="0 0 16 16"><defs><clipPath id="cho"><circle cx="8" cy="8" r="8"/></clipPath></defs><g clip-path="url(#cho)"><rect width="16" height="16" fill="#2a2a2a"/><path d="M0 0 H5 Q3 4 4.5 8 Q3.5 12 6 16 H0Z" fill="#e9e9e9"/><path d="M5.5 3.5 Q9 2.5 9.5 6 Q10.5 8 9.5 9.5 Q9 12 6.5 13 Q4.5 10 5 7.5 Z" fill="#d2d2d2"/><path d="M8 6.5 Q9.5 9 8.5 11.5" stroke="#777" stroke-width="0.8" fill="none"/></g></svg></div>
<div class="t" style="left:1414.2px;top:500.0px;color:#7f2c24">Hannes Obweger</div>
<div class="a" style="left:156px;top:528.1px;width:33.30000000000001px;height:28.0px;background:#f1f2f4;border:1px solid #e2e4e9;border-right:none;border-top:none;border-radius:3px 0 0 3px"></div>
<div class="a" style="left:188.3px;top:528.1px;width:1498.9px;height:28.0px;background:#ffd5d2"></div>
<div class="a" style="left:1384.8px;top:528.1px;width:151.29999999999995px;height:28.0px;background:#f8e6a0"></div>
<div class="a" style="left:188.3px;top:554.8000000000001px;width:1498.9px;height:1.6px;background:rgba(9,30,66,0.065)"></div>
<div class="a" style="left:252.89999999999998px;top:528.1px;width:1.6px;height:28.0px;background:rgba(9,30,66,0.065)"></div>
<div class="a" style="left:377.9px;top:528.1px;width:1.6px;height:28.0px;background:rgba(9,30,66,0.065)"></div>
<div class="a" style="left:736.2px;top:528.1px;width:1.6px;height:28.0px;background:rgba(9,30,66,0.065)"></div>
<div class="a" style="left:800.3000000000001px;top:528.1px;width:1.6px;height:28.0px;background:rgba(9,30,66,0.065)"></div>
<div class="a" style="left:1000.7px;top:528.1px;width:1.6px;height:28.0px;background:rgba(9,30,66,0.065)"></div>
<div class="a" style="left:1153.9px;top:528.1px;width:1.6px;height:28.0px;background:rgba(9,30,66,0.065)"></div>
<div class="a" style="left:1303.7px;top:528.1px;width:1.6px;height:28.0px;background:rgba(9,30,66,0.065)"></div>
<div class="a" style="left:1384.5px;top:528.1px;width:1.6px;height:28.0px;background:rgba(9,30,66,0.065)"></div>
<div class="a" style="left:1535.8px;top:528.1px;width:1.6px;height:28.0px;background:rgba(9,30,66,0.065)"></div>
<div class="ic" style="left:213.8px;top:535.6px"><svg width="14" height="14" viewBox="0 0 14 14"><rect width="14" height="14" rx="2" fill="#ec3b2e"/><circle cx="7" cy="7" r="3.4" fill="#fff"/></svg></div>
<div class="t" style="left:262.2px;top:528.0px;color:#a34a40">WORK-226</div>
<div class="a" style="left:393.1px;top:530.1px;width:1.7px;height:24.0px;background:rgba(9,30,66,0.12)"></div>
<div class="a" style="left:409.0px;top:530.1px;width:1.7px;height:24.0px;background:rgba(9,30,66,0.12)"></div>
<div class="a" style="left:424.90000000000003px;top:530.1px;width:1.7px;height:24.0px;background:rgba(9,30,66,0.12)"></div>
<div class="a" style="left:440.8px;top:530.1px;width:1.7px;height:24.0px;background:rgba(9,30,66,0.12)"></div>
<div class="a" style="left:442.5px;top:541.7px;width:7px;height:1.7px;background:rgba(9,30,66,0.12)"></div>
<div class="t" style="left:451.0px;top:528.0px;color:#7f2c24">API error when clicking very slowly</div>
<div class="ic" style="left:760.7px;top:533.7px"><svg width="16" height="16" viewBox="0 0 16 16"><path d="M2.5 8 L8 4 L13.5 8 M2.5 12 L8 8 L13.5 12" stroke="#f4572f" fill="none" stroke-width="2.1" stroke-linecap="round" stroke-linejoin="round"/></svg></div>
<div class="a" style="left:810.1px;top:533.1px;line-height:16px"><span class="lz" style="background:#e9f2ff;color:#0c66e4">IN PROGRESS</span></div>
<div class="ic" style="left:1393.4px;top:534.1px"><svg width="16" height="16" viewBox="0 0 16 16"><circle cx="8" cy="8" r="8" fill="#5e6c84"/><circle cx="8" cy="6.2" r="2.6" fill="#fff"/><path d="M3.2 12.8 Q3.6 9.4 8 9.4 Q12.4 9.4 12.8 12.8 Q10.8 14.6 8 14.6 Q5.2 14.6 3.2 12.8Z" fill="#fff"/></svg></div>
<div class="t" style="left:1414.2px;top:528.0px;color:#a08f55">Unassigned</div>
<div class="a" style="left:156px;top:556.1px;width:33.30000000000001px;height:28.0px;background:#f1f2f4;border:1px solid #e2e4e9;border-right:none;border-top:none;border-radius:3px 0 0 3px"></div>
<div class="a" style="left:188.3px;top:556.1px;width:1498.9px;height:28.0px;background:#ffd5d2"></div>
<div class="a" style="left:1384.8px;top:556.1px;width:151.29999999999995px;height:28.0px;background:#f8e6a0"></div>
<div class="a" style="left:188.3px;top:582.8000000000001px;width:1498.9px;height:1.6px;background:rgba(9,30,66,0.065)"></div>
<div class="a" style="left:252.89999999999998px;top:556.1px;width:1.6px;height:28.0px;background:rgba(9,30,66,0.065)"></div>
<div class="a" style="left:377.9px;top:556.1px;width:1.6px;height:28.0px;background:rgba(9,30,66,0.065)"></div>
<div class="a" style="left:736.2px;top:556.1px;width:1.6px;height:28.0px;background:rgba(9,30,66,0.065)"></div>
<div class="a" style="left:800.3000000000001px;top:556.1px;width:1.6px;height:28.0px;background:rgba(9,30,66,0.065)"></div>
<div class="a" style="left:1000.7px;top:556.1px;width:1.6px;height:28.0px;background:rgba(9,30,66,0.065)"></div>
<div class="a" style="left:1153.9px;top:556.1px;width:1.6px;height:28.0px;background:rgba(9,30,66,0.065)"></div>
<div class="a" style="left:1303.7px;top:556.1px;width:1.6px;height:28.0px;background:rgba(9,30,66,0.065)"></div>
<div class="a" style="left:1384.5px;top:556.1px;width:1.6px;height:28.0px;background:rgba(9,30,66,0.065)"></div>
<div class="a" style="left:1535.8px;top:556.1px;width:1.6px;height:28.0px;background:rgba(9,30,66,0.065)"></div>
<div class="ic" style="left:213.8px;top:563.6px"><svg width="14" height="14" viewBox="0 0 14 14"><rect width="14" height="14" rx="2" fill="#ec3b2e"/><circle cx="7" cy="7" r="3.4" fill="#fff"/></svg></div>
<div class="t" style="left:262.2px;top:556.0px;color:#a34a40">WORK-225</div>
<div class="a" style="left:393.1px;top:558.1px;width:1.7px;height:24.0px;background:rgba(9,30,66,0.12)"></div>
<div class="a" style="left:409.0px;top:558.1px;width:1.7px;height:24.0px;background:rgba(9,30,66,0.12)"></div>
<div class="a" style="left:424.90000000000003px;top:558.1px;width:1.7px;height:24.0px;background:rgba(9,30,66,0.12)"></div>
<div class="a" style="left:440.8px;top:558.1px;width:1.7px;height:12.0px;background:rgba(9,30,66,0.12)"></div>
<div class="a" style="left:442.5px;top:569.7px;width:7px;height:1.7px;background:rgba(9,30,66,0.12)"></div>
<div class="t" style="left:451.0px;top:556.0px;color:#7f2c24">Things ain't working</div>
<div class="ic" style="left:760.7px;top:561.7px"><svg width="16" height="16" viewBox="0 0 16 16"><path d="M2.5 5.8 H13.5 M2.5 10.2 H13.5" stroke="#f5a300" fill="none" stroke-width="2.1" stroke-linecap="round" stroke-linejoin="round"/></svg></div>
<div class="a" style="left:810.1px;top:561.1px;line-height:16px"><span class="lz" style="background:#ebecf0;color:#44546f">TO DO</span></div>
<div class="ic" style="left:1393.4px;top:562.1px"><svg width="16" height="16" viewBox="0 0 16 16"><circle cx="8" cy="8" r="8" fill="#5e6c84"/><circle cx="8" cy="6.2" r="2.6" fill="#fff"/><path d="M3.2 12.8 Q3.6 9.4 8 9.4 Q12.4 9.4 12.8 12.8 Q10.8 14.6 8 14.6 Q5.2 14.6 3.2 12.8Z" fill="#fff"/></svg></div>
<div class="t" style="left:1414.2px;top:556.0px;color:#a08f55">Unassigned</div>
<div class="a" style="left:1544.4px;top:561.3000000000001px;width:142.79999999999995px;height:18px;overflow:hidden;white-space:nowrap;font-size:14px;display:flex"><span style="display:inline-flex;align-items:center;height:17.5px;padding:0 5px 0 4px;margin-right:7px;background:rgba(9,30,66,0.06);border-radius:3px;white-space:nowrap;color:#7f2c24;font-size:13.5px;letter-spacing:-0.15px;-webkit-text-stroke:0.2px currentColor"><span style="display:block;width:12px;height:12px;margin-right:5px"><svg width="12" height="12" viewBox="0 0 12 12" style="display:block"><rect x="0.5" y="0.5" width="11" height="11" rx="2" fill="#34b233"/><rect x="3" y="3" width="6" height="6" fill="#1d2f45"/></svg></span>Ghostbusting device</span></div>
<div class="a" style="left:140px;top:584.1px;width:49.30000000000001px;height:28.0px;background:#f1f2f4;border:1px solid #e2e4e9;border-right:none;border-top:none;border-radius:3px 0 0 3px"></div>
<div class="ic" style="left:150px;top:591.3000000000001px"><svg width="12" height="12" viewBox="0 0 12 12"><path d="M3 4.5 L6 7.5 L9 4.5" fill="none" stroke="#2c3e5d" stroke-width="1.8" stroke-linecap="round" stroke-linejoin="round"/></svg></div>
<div class="a" style="left:188.3px;top:584.1px;width:1498.9px;height:28.0px;background:#dfd8fd"></div>
<div class="a" style="left:188.3px;top:610.8000000000001px;width:1498.9px;height:1.6px;background:rgba(9,30,66,0.065)"></div>
<div class="a" style="left:252.89999999999998px;top:584.1px;width:1.6px;height:28.0px;background:rgba(9,30,66,0.065)"></div>
<div class="a" style="left:377.9px;top:584.1px;width:1.6px;height:28.0px;background:rgba(9,30,66,0.065)"></div>
<div class="a" style="left:736.2px;top:584.1px;width:1.6px;height:28.0px;background:rgba(9,30,66,0.065)"></div>
<div class="a" style="left:800.3000000000001px;top:584.1px;width:1.6px;height:28.0px;background:rgba(9,30,66,0.065)"></div>
<div class="a" style="left:1000.7px;top:584.1px;width:1.6px;height:28.0px;background:rgba(9,30,66,0.065)"></div>
<div class="a" style="left:1153.9px;top:584.1px;width:1.6px;height:28.0px;background:rgba(9,30,66,0.065)"></div>
<div class="a" style="left:1303.7px;top:584.1px;width:1.6px;height:28.0px;background:rgba(9,30,66,0.065)"></div>
<div class="a" style="left:1384.5px;top:584.1px;width:1.6px;height:28.0px;background:rgba(9,30,66,0.065)"></div>
<div class="a" style="left:1535.8px;top:584.1px;width:1.6px;height:28.0px;background:rgba(9,30,66,0.065)"></div>
<div class="ic" style="left:213.8px;top:591.6px"><svg width="14" height="14" viewBox="0 0 14 14"><rect width="14" height="14" rx="2" fill="#8f4fe0"/><path d="M9.2 2.2 L3.6 7.9 H6.6 L4.8 11.8 L10.4 6.1 H7.4 Z" fill="#fff"/></svg></div>
<div class="t" style="left:262.2px;top:584.0px;color:#5f5196">WORK-147</div>
<div class="a" style="left:393.1px;top:586.1px;width:1.7px;height:24.0px;background:rgba(9,30,66,0.12)"></div>
<div class="a" style="left:409.0px;top:586.1px;width:1.7px;height:24.0px;background:rgba(9,30,66,0.12)"></div>
<div class="a" style="left:424.90000000000003px;top:586.1px;width:1.7px;height:24.0px;background:rgba(9,30,66,0.12)"></div>
<div class="a" style="left:426.6px;top:597.7px;width:7px;height:1.7px;background:rgba(9,30,66,0.12)"></div>
<div class="t" style="left:435.09999999999997px;top:584.0px;color:#3b2f78">Destinations</div>
<div class="ic" style="left:760.7px;top:589.7px"><svg width="16" height="16" viewBox="0 0 16 16"><path d="M2.5 4 L8 8 L13.5 4 M2.5 8 L8 12 L13.5 8" stroke="#1d6cf2" fill="none" stroke-width="2.1" stroke-linecap="round" stroke-linejoin="round"/></svg></div>
<div class="a" style="left:810.1px;top:589.1px;line-height:16px"><span class="lz" style="background:#d3f8e6;color:#1c6b49">DONE</span></div>
<div class="t" style="left:1010.5px;top:584.0px;letter-spacing:0px;color:#3b2f78">24w 3d 16h</div>
<div class="t" style="left:1161.0px;top:584.0px;letter-spacing:0.1px;color:#3b2f78">5332.08h</div>
<div class="a" style="left:1336px;top:589.3000000000001px;width:17.5px;height:17.5px;background:#1d7afc;border-radius:3px"></div>
<div class="ic" style="left:1393.4px;top:590.1px"><svg width="16" height="16" viewBox="0 0 16 16"><defs><clipPath id="cdf"><circle cx="8" cy="8" r="8"/></clipPath></defs><g clip-path="url(#cdf)"><rect width="16" height="16" fill="#efe6e0"/><path d="M0 9 Q3 7 5 11 L5 16 L0 16Z M16 9 Q13 7 11 11 L11 16 L16 16Z" fill="#1c1b22"/><ellipse cx="8" cy="8.6" rx="4.4" ry="6" fill="#d4916f"/><path d="M3.8 6.5 Q4.2 1.6 8 1.6 Q11.8 1.6 12.2 6.5 Q10.5 4 8 4.2 Q5.5 4 3.8 6.5Z" fill="#8a5636"/></g></svg></div>
<div class="t" style="left:1414.2px;top:584.0px;color:#3b2f78">Daniel Franz</div>
<div class="a" style="left:156px;top:612.1px;width:33.30000000000001px;height:28.0px;background:#f1f2f4;border:1px solid #e2e4e9;border-right:none;border-top:none;border-radius:3px 0 0 3px"></div>
<div class="a" style="left:188.3px;top:612.1px;width:1498.9px;height:28.0px;background:#aaf2d6"></div>
<div class="a" style="left:188.3px;top:638.8000000000001px;width:1498.9px;height:1.6px;background:rgba(9,30,66,0.065)"></div>
<div class="a" style="left:252.89999999999998px;top:612.1px;width:1.6px;height:28.0px;background:rgba(9,30,66,0.065)"></div>
<div class="a" style="left:377.9px;top:612.1px;width:1.6px;height:28.0px;background:rgba(9,30,66,0.065)"></div>
<div class="a" style="left:736.2px;top:612.1px;width:1.6px;height:28.0px;background:rgba(9,30,66,0.065)"></div>
<div class="a" style="left:800.3000000000001px;top:612.1px;width:1.6px;height:28.0px;background:rgba(9,30,66,0.065)"></div>
<div class="a" style="left:1000.7px;top:612.1px;width:1.6px;height:28.0px;background:rgba(9,30,66,0.065)"></div>
<div class="a" style="left:1153.9px;top:612.1px;width:1.6px;height:28.0px;background:rgba(9,30,66,0.065)"></div>
<div class="a" style="left:1303.7px;top:612.1px;width:1.6px;height:28.0px;background:rgba(9,30,66,0.065)"></div>
<div class="a" style="left:1384.5px;top:612.1px;width:1.6px;height:28.0px;background:rgba(9,30,66,0.065)"></div>
<div class="a" style="left:1535.8px;top:612.1px;width:1.6px;height:28.0px;background:rgba(9,30,66,0.065)"></div>
<div class="ic" style="left:213.8px;top:619.6px"><svg width="14" height="14" viewBox="0 0 14 14"><rect width="14" height="14" rx="2" fill="#5aad2c"/><path d="M4 3 H10 V11.3 L7 8.8 L4 11.3 Z" fill="#fff"/></svg></div>
<div class="t" style="left:262.2px;top:612.0px;color:#2b7356">WORK-96</div>
<div class="a" style="left:393.1px;top:614.1px;width:1.7px;height:24.0px;background:rgba(9,30,66,0.12)"></div>
<div class="a" style="left:409.0px;top:614.1px;width:1.7px;height:24.0px;background:rgba(9,30,66,0.12)"></div>
<div class="a" style="left:424.90000000000003px;top:614.1px;width:1.7px;height:24.0px;background:rgba(9,30,66,0.12)"></div>
<div class="a" style="left:440.8px;top:614.1px;width:1.7px;height:24.0px;background:rgba(9,30,66,0.12)"></div>
<div class="a" style="left:442.5px;top:625.7px;width:7px;height:1.7px;background:rgba(9,30,66,0.12)"></div>
<div class="t" style="left:451.0px;top:612.0px;color:#17573a">Moon stopover retrieval</div>
<div class="ic" style="left:760.7px;top:617.7px"><svg width="16" height="16" viewBox="0 0 16 16"><path d="M2.5 8 L8 4 L13.5 8 M2.5 12 L8 8 L13.5 12" stroke="#f4572f" fill="none" stroke-width="2.1" stroke-linecap="round" stroke-linejoin="round"/></svg></div>
<div class="a" style="left:810.1px;top:617.1px;line-height:16px"><span class="lz" style="background:#e9f2ff;color:#0c66e4">IN PROGRESS</span></div>
<div class="t" style="left:1010.5px;top:612.0px;letter-spacing:0px;color:#17573a">112w 2d 9h 56m</div>
<div class="t" style="left:1161.0px;top:612.0px;letter-spacing:0.1px;color:#17573a">523.27h</div>
<div class="a" style="left:1336px;top:617.3000000000001px;width:17.5px;height:17.5px;background:#e2231f;border-radius:3px"></div>
<div class="ic" style="left:1393.4px;top:618.1px"><svg width="16" height="16" viewBox="0 0 16 16"><defs><clipPath id="cho"><circle cx="8" cy="8" r="8"/></clipPath></defs><g clip-path="url(#cho)"><rect width="16" height="16" fill="#2a2a2a"/><path d="M0 0 H5 Q3 4 4.5 8 Q3.5 12 6 16 H0Z" fill="#e9e9e9"/><path d="M5.5 3.5 Q9 2.5 9.5 6 Q10.5 8 9.5 9.5 Q9 12 6.5 13 Q4.5 10 5 7.5 Z" fill="#d2d2d2"/><path d="M8 6.5 Q9.5 9 8.5 11.5" stroke="#777" stroke-width="0.8" fill="none"/></g></svg></div>
<div class="t" style="left:1414.2px;top:612.0px;color:#17573a">Hannes Obweger</div>
<div class="a" style="left:1544.4px;top:617.3000000000001px;width:142.79999999999995px;height:18px;overflow:hidden;white-space:nowrap;font-size:14px;display:flex"><span style="display:inline-flex;align-items:center;height:17.5px;padding:0 5px 0 4px;margin-right:7px;background:rgba(9,30,66,0.06);border-radius:3px;white-space:nowrap;color:#17573a;font-size:13.5px;letter-spacing:-0.15px;-webkit-text-stroke:0.2px currentColor"><span style="display:block;width:12px;height:12px;margin-right:5px"><svg width="12" height="12" viewBox="0 0 12 12" style="display:block"><rect x="0.5" y="0.5" width="11" height="11" rx="2" fill="#34b233"/><rect x="3" y="3" width="6" height="6" fill="#1d2f45"/></svg></span>Microverse battery</span></div>
<div class="a" style="left:156px;top:640.1px;width:33.30000000000001px;height:28.0px;background:#f1f2f4;border:1px solid #e2e4e9;border-right:none;border-top:none;border-radius:3px 0 0 3px"></div>
<div class="a" style="left:188.3px;top:640.1px;width:1498.9px;height:28.0px;background:#aaf2d6"></div>
<div class="a" style="left:188.3px;top:666.8000000000001px;width:1498.9px;height:1.6px;background:rgba(9,30,66,0.065)"></div>
<div class="a" style="left:252.89999999999998px;top:640.1px;width:1.6px;height:28.0px;background:rgba(9,30,66,0.065)"></div>
<div class="a" style="left:377.9px;top:640.1px;width:1.6px;height:28.0px;background:rgba(9,30,66,0.065)"></div>
<div class="a" style="left:736.2px;top:640.1px;width:1.6px;height:28.0px;background:rgba(9,30,66,0.065)"></div>
<div class="a" style="left:800.3000000000001px;top:640.1px;width:1.6px;height:28.0px;background:rgba(9,30,66,0.065)"></div>
<div class="a" style="left:1000.7px;top:640.1px;width:1.6px;height:28.0px;background:rgba(9,30,66,0.065)"></div>
<div class="a" style="left:1153.9px;top:640.1px;width:1.6px;height:28.0px;background:rgba(9,30,66,0.065)"></div>
<div class="a" style="left:1303.7px;top:640.1px;width:1.6px;height:28.0px;background:rgba(9,30,66,0.065)"></div>
<div class="a" style="left:1384.5px;top:640.1px;width:1.6px;height:28.0px;background:rgba(9,30,66,0.065)"></div>
<div class="a" style="left:1535.8px;top:640.1px;width:1.6px;height:28.0px;background:rgba(9,30,66,0.065)"></div>
<div class="ic" style="left:213.8px;top:647.6px"><svg width="14" height="14" viewBox="0 0 14 14"><rect width="14" height="14" rx="2" fill="#5aad2c"/><path d="M4 3 H10 V11.3 L7 8.8 L4 11.3 Z" fill="#fff"/></svg></div>
<div class="t" style="left:262.2px;top:640.0px;color:#2b7356">WORK-95</div>
<div class="a" style="left:393.1px;top:642.1px;width:1.7px;height:24.0px;background:rgba(9,30,66,0.12)"></div>
<div class="a" style="left:409.0px;top:642.1px;width:1.7px;height:24.0px;background:rgba(9,30,66,0.12)"></div>
<div class="a" style="left:424.90000000000003px;top:642.1px;width:1.7px;height:24.0px;background:rgba(9,30,66,0.12)"></div>
<div class="a" style="left:440.8px;top:642.1px;width:1.7px;height:24.0px;background:rgba(9,30,66,0.12)"></div>
<div class="a" style="left:442.5px;top:653.7px;width:7px;height:1.7px;background:rgba(9,30,66,0.12)"></div>
<div class="t" style="left:451.0px;top:640.0px;color:#17573a">As an operator I want to have a turbo button</div>
<div class="ic" style="left:760.7px;top:645.7px"><svg width="16" height="16" viewBox="0 0 16 16"><path d="M2.5 5.8 H13.5 M2.5 10.2 H13.5" stroke="#f5a300" fill="none" stroke-width="2.1" stroke-linecap="round" stroke-linejoin="round"/></svg></div>
<div class="a" style="left:810.1px;top:645.1px;line-height:16px"><span class="lz" style="background:#e9f2ff;color:#0c66e4">IN PROGRESS</span></div>
<div class="t" style="left:1010.5px;top:640.0px;letter-spacing:0px;color:#17573a">109w 1d 13h 54m</div>
<div class="t" style="left:1161.0px;top:640.0px;letter-spacing:0.1px;color:#17573a">993.29h</div>
<div class="a" style="left:1336px;top:645.3000000000001px;width:17.5px;height:17.5px;background:#e2231f;border-radius:3px"></div>
<div class="ic" style="left:1393.4px;top:646.1px"><svg width="16" height="16" viewBox="0 0 16 16"><defs><clipPath id="cho"><circle cx="8" cy="8" r="8"/></clipPath></defs><g clip-path="url(#cho)"><rect width="16" height="16" fill="#2a2a2a"/><path d="M0 0 H5 Q3 4 4.5 8 Q3.5 12 6 16 H0Z" fill="#e9e9e9"/><path d="M5.5 3.5 Q9 2.5 9.5 6 Q10.5 8 9.5 9.5 Q9 12 6.5 13 Q4.5 10 5 7.5 Z" fill="#d2d2d2"/><path d="M8 6.5 Q9.5 9 8.5 11.5" stroke="#777" stroke-width="0.8" fill="none"/></g></svg></div>
<div class="t" style="left:1414.2px;top:640.0px;color:#17573a">Hannes Obweger</div>
<div class="a" style="left:156px;top:668.1px;width:33.30000000000001px;height:28.0px;background:#f1f2f4;border:1px solid #e2e4e9;border-right:none;border-top:none;border-radius:3px 0 0 3px"></div>
<div class="a" style="left:188.3px;top:668.1px;width:1498.9px;height:28.0px;background:#ffffff"></div>
<div class="a" style="left:188.3px;top:694.8000000000001px;width:1498.9px;height:1.6px;background:rgba(9,30,66,0.065)"></div>
<div class="a" style="left:252.89999999999998px;top:668.1px;width:1.6px;height:28.0px;background:rgba(9,30,66,0.065)"></div>
<div class="a" style="left:377.9px;top:668.1px;width:1.6px;height:28.0px;background:rgba(9,30,66,0.065)"></div>
<div class="a" style="left:736.2px;top:668.1px;width:1.6px;height:28.0px;background:rgba(9,30,66,0.065)"></div>
<div class="a" style="left:800.3000000000001px;top:668.1px;width:1.6px;height:28.0px;background:rgba(9,30,66,0.065)"></div>
<div class="a" style="left:1000.7px;top:668.1px;width:1.6px;height:28.0px;background:rgba(9,30,66,0.065)"></div>
<div class="a" style="left:1153.9px;top:668.1px;width:1.6px;height:28.0px;background:rgba(9,30,66,0.065)"></div>
<div class="a" style="left:1303.7px;top:668.1px;width:1.6px;height:28.0px;background:rgba(9,30,66,0.065)"></div>
<div class="a" style="left:1384.5px;top:668.1px;width:1.6px;height:28.0px;background:rgba(9,30,66,0.065)"></div>
<div class="a" style="left:1535.8px;top:668.1px;width:1.6px;height:28.0px;background:rgba(9,30,66,0.065)"></div>
<div class="ic" style="left:213.8px;top:675.6px"><svg width="14" height="14" viewBox="0 0 14 14"><rect width="14" height="14" rx="2" fill="#3ea6ef"/><path d="M3.5 7.2 L6 9.6 L10.5 4.4" fill="none" stroke="#fff" stroke-width="2.1" stroke-linecap="round" stroke-linejoin="round"/></svg></div>
<div class="t" style="left:262.2px;top:668.0px;color:#44546f">WORK-97</div>
<div class="a" style="left:393.1px;top:670.1px;width:1.7px;height:24.0px;background:rgba(9,30,66,0.12)"></div>
<div class="a" style="left:409.0px;top:670.1px;width:1.7px;height:24.0px;background:rgba(9,30,66,0.12)"></div>
<div class="a" style="left:424.90000000000003px;top:670.1px;width:1.7px;height:24.0px;background:rgba(9,30,66,0.12)"></div>
<div class="a" style="left:440.8px;top:670.1px;width:1.7px;height:24.0px;background:rgba(9,30,66,0.12)"></div>
<div class="a" style="left:442.5px;top:681.7px;width:7px;height:1.7px;background:rgba(9,30,66,0.12)"></div>
<div class="t" style="left:451.0px;top:668.0px;color:#172b4d">Integrate partner travel sites</div>
<div class="ic" style="left:760.7px;top:673.7px"><svg width="16" height="16" viewBox="0 0 16 16"><path d="M2.5 6 L8 10 L13.5 6" stroke="#1d6cf2" fill="none" stroke-width="2.1" stroke-linecap="round" stroke-linejoin="round"/></svg></div>
<div class="a" style="left:810.1px;top:673.1px;line-height:16px"><span class="lz" style="background:#d3f8e6;color:#1c6b49">DONE</span></div>
<div class="t" style="left:1010.5px;top:668.0px;letter-spacing:0px;color:#172b4d">115w 1d 9h 36m</div>
<div class="t" style="left:1161.0px;top:668.0px;letter-spacing:0.1px;color:#172b4d">0.01h</div>
<div class="a" style="left:1336px;top:673.3000000000001px;width:17.5px;height:17.5px;background:#e2231f;border-radius:3px"></div>
<div class="ic" style="left:1393.4px;top:674.1px"><svg width="16" height="16" viewBox="0 0 16 16"><defs><clipPath id="cho"><circle cx="8" cy="8" r="8"/></clipPath></defs><g clip-path="url(#cho)"><rect width="16" height="16" fill="#2a2a2a"/><path d="M0 0 H5 Q3 4 4.5 8 Q3.5 12 6 16 H0Z" fill="#e9e9e9"/><path d="M5.5 3.5 Q9 2.5 9.5 6 Q10.5 8 9.5 9.5 Q9 12 6.5 13 Q4.5 10 5 7.5 Z" fill="#d2d2d2"/><path d="M8 6.5 Q9.5 9 8.5 11.5" stroke="#777" stroke-width="0.8" fill="none"/></g></svg></div>
<div class="t" style="left:1414.2px;top:668.0px;color:#172b4d">Hannes Obweger</div>
<div class="a" style="left:1544.4px;top:673.3000000000001px;width:142.79999999999995px;height:18px;overflow:hidden;white-space:nowrap;font-size:14px;display:flex"><span style="display:inline-flex;align-items:center;height:17.5px;padding:0 5px 0 4px;margin-right:7px;background:rgba(9,30,66,0.06);border-radius:3px;white-space:nowrap;color:#172b4d;font-size:13.5px;letter-spacing:-0.15px;-webkit-text-stroke:0.2px currentColor"><span style="display:block;width:12px;height:12px;margin-right:5px"><svg width="12" height="12" viewBox="0 0 12 12" style="display:block"><g stroke="#84b8f0" stroke-width="1.3" stroke-linecap="round"><path d="M6 1 V11 M1.7 3.5 L10.3 8.5 M1.7 8.5 L10.3 3.5"/></g><circle cx="6" cy="6" r="1.6" fill="#cfe3fa"/></svg></span>Broken leg serum</span></div>
<div class="a" style="left:156px;top:696.1px;width:33.30000000000001px;height:28.0px;background:#f1f2f4;border:1px solid #e2e4e9;border-right:none;border-top:none;border-radius:3px 0 0 3px"></div>
<div class="a" style="left:188.3px;top:696.1px;width:1498.9px;height:28.0px;background:#aaf2d6"></div>
<div class="a" style="left:188.3px;top:722.8000000000001px;width:1498.9px;height:1.6px;background:rgba(9,30,66,0.065)"></div>
<div class="a" style="left:252.89999999999998px;top:696.1px;width:1.6px;height:28.0px;background:rgba(9,30,66,0.065)"></div>
<div class="a" style="left:377.9px;top:696.1px;width:1.6px;height:28.0px;background:rgba(9,30,66,0.065)"></div>
<div class="a" style="left:736.2px;top:696.1px;width:1.6px;height:28.0px;background:rgba(9,30,66,0.065)"></div>
<div class="a" style="left:800.3000000000001px;top:696.1px;width:1.6px;height:28.0px;background:rgba(9,30,66,0.065)"></div>
<div class="a" style="left:1000.7px;top:696.1px;width:1.6px;height:28.0px;background:rgba(9,30,66,0.065)"></div>
<div class="a" style="left:1153.9px;top:696.1px;width:1.6px;height:28.0px;background:rgba(9,30,66,0.065)"></div>
<div class="a" style="left:1303.7px;top:696.1px;width:1.6px;height:28.0px;background:rgba(9,30,66,0.065)"></div>
<div class="a" style="left:1384.5px;top:696.1px;width:1.6px;height:28.0px;background:rgba(9,30,66,0.065)"></div>
<div class="a" style="left:1535.8px;top:696.1px;width:1.6px;height:28.0px;background:rgba(9,30,66,0.065)"></div>
<div class="ic" style="left:213.8px;top:703.6px"><svg width="14" height="14" viewBox="0 0 14 14"><rect width="14" height="14" rx="2" fill="#5aad2c"/><path d="M4 3 H10 V11.3 L7 8.8 L4 11.3 Z" fill="#fff"/></svg></div>
<div class="t" style="left:262.2px;top:696.0px;color:#2b7356">WORK-98</div>
<div class="a" style="left:393.1px;top:698.1px;width:1.7px;height:24.0px;background:rgba(9,30,66,0.12)"></div>
<div class="a" style="left:409.0px;top:698.1px;width:1.7px;height:24.0px;background:rgba(9,30,66,0.12)"></div>
<div class="a" style="left:424.90000000000003px;top:698.1px;width:1.7px;height:24.0px;background:rgba(9,30,66,0.12)"></div>
<div class="a" style="left:440.8px;top:698.1px;width:1.7px;height:12.0px;background:rgba(9,30,66,0.12)"></div>
<div class="a" style="left:442.5px;top:709.7px;width:7px;height:1.7px;background:rgba(9,30,66,0.12)"></div>
<div class="t" style="left:451.0px;top:696.0px;color:#17573a">Multi-destination search UI mobile</div>
<div class="ic" style="left:760.7px;top:701.7px"><svg width="16" height="16" viewBox="0 0 16 16"><path d="M2.5 4 L8 8 L13.5 4 M2.5 8 L8 12 L13.5 8" stroke="#1d6cf2" fill="none" stroke-width="2.1" stroke-linecap="round" stroke-linejoin="round"/></svg></div>
<div class="a" style="left:810.1px;top:701.1px;line-height:16px"><span class="lz" style="background:#d3f8e6;color:#1c6b49">DONE</span></div>
<div class="t" style="left:1010.5px;top:696.0px;letter-spacing:0px;color:#17573a">104w 4d 1h 14m</div>
<div class="t" style="left:1161.0px;top:696.0px;letter-spacing:0.1px;color:#17573a">0.02h</div>
<div class="a" style="left:1336px;top:701.3000000000001px;width:17.5px;height:17.5px;background:#f5cd00;border-radius:3px"></div>
<div class="ic" style="left:1393.4px;top:702.1px"><svg width="16" height="16" viewBox="0 0 16 16"><defs><clipPath id="cho"><circle cx="8" cy="8" r="8"/></clipPath></defs><g clip-path="url(#cho)"><rect width="16" height="16" fill="#2a2a2a"/><path d="M0 0 H5 Q3 4 4.5 8 Q3.5 12 6 16 H0Z" fill="#e9e9e9"/><path d="M5.5 3.5 Q9 2.5 9.5 6 Q10.5 8 9.5 9.5 Q9 12 6.5 13 Q4.5 10 5 7.5 Z" fill="#d2d2d2"/><path d="M8 6.5 Q9.5 9 8.5 11.5" stroke="#777" stroke-width="0.8" fill="none"/></g></svg></div>
<div class="t" style="left:1414.2px;top:696.0px;color:#17573a">Hannes Obweger</div>
<div class="a" style="left:1544.4px;top:701.3000000000001px;width:142.79999999999995px;height:18px;overflow:hidden;white-space:nowrap;font-size:14px;display:flex"><span style="display:inline-flex;align-items:center;height:17.5px;padding:0 5px 0 4px;margin-right:7px;background:rgba(9,30,66,0.06);border-radius:3px;white-space:nowrap;color:#17573a;font-size:13.5px;letter-spacing:-0.15px;-webkit-text-stroke:0.2px currentColor"><span style="display:block;width:12px;height:12px;margin-right:5px"><svg width="12" height="12" viewBox="0 0 12 12" style="display:block"><rect x="0.5" y="0.5" width="11" height="11" rx="2" fill="#34b233"/><rect x="3" y="3" width="6" height="6" fill="#1d2f45"/></svg></span>Cognition amplifier</span></div>
<div class="a" style="left:140px;top:724.1px;width:49.30000000000001px;height:28.0px;background:#f1f2f4;border:1px solid #e2e4e9;border-right:none;border-top:none;border-radius:3px 0 0 3px"></div>
<div class="ic" style="left:150px;top:731.3000000000001px"><svg width="12" height="12" viewBox="0 0 12 12"><path d="M3 4.5 L6 7.5 L9 4.5" fill="none" stroke="#2c3e5d" stroke-width="1.8" stroke-linecap="round" stroke-linejoin="round"/></svg></div>
<div class="a" style="left:188.3px;top:724.1px;width:1498.9px;height:28.0px;background:#dfd8fd"></div>
<div class="a" style="left:188.3px;top:750.8000000000001px;width:1498.9px;height:1.6px;background:rgba(9,30,66,0.065)"></div>
<div class="a" style="left:252.89999999999998px;top:724.1px;width:1.6px;height:28.0px;background:rgba(9,30,66,0.065)"></div>
<div class="a" style="left:377.9px;top:724.1px;width:1.6px;height:28.0px;background:rgba(9,30,66,0.065)"></div>
<div class="a" style="left:736.2px;top:724.1px;width:1.6px;height:28.0px;background:rgba(9,30,66,0.065)"></div>
<div class="a" style="left:800.3000000000001px;top:724.1px;width:1.6px;height:28.0px;background:rgba(9,30,66,0.065)"></div>
<div class="a" style="left:1000.7px;top:724.1px;width:1.6px;height:28.0px;background:rgba(9,30,66,0.065)"></div>
<div class="a" style="left:1153.9px;top:724.1px;width:1.6px;height:28.0px;background:rgba(9,30,66,0.065)"></div>
<div class="a" style="left:1303.7px;top:724.1px;width:1.6px;height:28.0px;background:rgba(9,30,66,0.065)"></div>
<div class="a" style="left:1384.5px;top:724.1px;width:1.6px;height:28.0px;background:rgba(9,30,66,0.065)"></div>
<div class="a" style="left:1535.8px;top:724.1px;width:1.6px;height:28.0px;background:rgba(9,30,66,0.065)"></div>
<div class="ic" style="left:213.8px;top:731.6px"><svg width="14" height="14" viewBox="0 0 14 14"><rect width="14" height="14" rx="2" fill="#8f4fe0"/><path d="M9.2 2.2 L3.6 7.9 H6.6 L4.8 11.8 L10.4 6.1 H7.4 Z" fill="#fff"/></svg></div>
<div class="t" style="left:262.2px;top:724.0px;color:#5f5196">WORK-145</div>
<div class="a" style="left:393.1px;top:726.1px;width:1.7px;height:24.0px;background:rgba(9,30,66,0.12)"></div>
<div class="a" style="left:409.0px;top:726.1px;width:1.7px;height:24.0px;background:rgba(9,30,66,0.12)"></div>
<div class="a" style="left:424.90000000000003px;top:726.1px;width:1.7px;height:12.0px;background:rgba(9,30,66,0.12)"></div>
<div class="a" style="left:426.6px;top:737.7px;width:7px;height:1.7px;background:rgba(9,30,66,0.12)"></div>
<div class="t" style="left:435.09999999999997px;top:724.0px;color:#3b2f78">Interstellar lobbying</div>
<div class="ic" style="left:760.7px;top:729.7px"><svg width="16" height="16" viewBox="0 0 16 16"><path d="M2.5 4 L8 8 L13.5 4 M2.5 8 L8 12 L13.5 8" stroke="#1d6cf2" fill="none" stroke-width="2.1" stroke-linecap="round" stroke-linejoin="round"/></svg></div>
<div class="a" style="left:810.1px;top:729.1px;line-height:16px"><span class="lz" style="background:#d3f8e6;color:#1c6b49">DONE</span></div>
<div class="t" style="left:1010.5px;top:724.0px;letter-spacing:0px;color:#3b2f78">1m</div>
<div class="t" style="left:1161.0px;top:724.0px;letter-spacing:0.1px;color:#3b2f78">0h</div>
<div class="a" style="left:1336px;top:729.3000000000001px;width:17.5px;height:17.5px;background:#e2231f;border-radius:3px"></div>
<div class="ic" style="left:1393.4px;top:730.1px"><svg width="16" height="16" viewBox="0 0 16 16"><defs><clipPath id="cdf"><circle cx="8" cy="8" r="8"/></clipPath></defs><g clip-path="url(#cdf)"><rect width="16" height="16" fill="#efe6e0"/><path d="M0 9 Q3 7 5 11 L5 16 L0 16Z M16 9 Q13 7 11 11 L11 16 L16 16Z" fill="#1c1b22"/><ellipse cx="8" cy="8.6" rx="4.4" ry="6" fill="#d4916f"/><path d="M3.8 6.5 Q4.2 1.6 8 1.6 Q11.8 1.6 12.2 6.5 Q10.5 4 8 4.2 Q5.5 4 3.8 6.5Z" fill="#8a5636"/></g></svg></div>
<div class="t" style="left:1414.2px;top:724.0px;color:#3b2f78">Daniel Franz</div>
<div class="a" style="left:156px;top:752.1px;width:33.30000000000001px;height:28.0px;background:#f1f2f4;border:1px solid #e2e4e9;border-right:none;border-top:none;border-radius:3px 0 0 3px"></div>
<div class="a" style="left:188.3px;top:752.1px;width:1498.9px;height:28.0px;background:#ffffff"></div>
<div class="a" style="left:188.3px;top:778.8000000000001px;width:1498.9px;height:1.6px;background:rgba(9,30,66,0.065)"></div>
<div class="a" style="left:252.89999999999998px;top:752.1px;width:1.6px;height:28.0px;background:rgba(9,30,66,0.065)"></div>
<div class="a" style="left:377.9px;top:752.1px;width:1.6px;height:28.0px;background:rgba(9,30,66,0.065)"></div>
<div class="a" style="left:736.2px;top:752.1px;width:1.6px;height:28.0px;background:rgba(9,30,66,0.065)"></div>
<div class="a" style="left:800.3000000000001px;top:752.1px;width:1.6px;height:28.0px;background:rgba(9,30,66,0.065)"></div>
<div class="a" style="left:1000.7px;top:752.1px;width:1.6px;height:28.0px;background:rgba(9,30,66,0.065)"></div>
<div class="a" style="left:1153.9px;top:752.1px;width:1.6px;height:28.0px;background:rgba(9,30,66,0.065)"></div>
<div class="a" style="left:1303.7px;top:752.1px;width:1.6px;height:28.0px;background:rgba(9,30,66,0.065)"></div>
<div class="a" style="left:1384.5px;top:752.1px;width:1.6px;height:28.0px;background:rgba(9,30,66,0.065)"></div>
<div class="a" style="left:1535.8px;top:752.1px;width:1.6px;height:28.0px;background:rgba(9,30,66,0.065)"></div>
<div class="ic" style="left:213.8px;top:759.6px"><svg width="14" height="14" viewBox="0 0 14 14"><rect width="14" height="14" rx="2" fill="#3ea6ef"/><path d="M3.5 7.2 L6 9.6 L10.5 4.4" fill="none" stroke="#fff" stroke-width="2.1" stroke-linecap="round" stroke-linejoin="round"/></svg></div>
<div class="t" style="left:262.2px;top:752.0px;color:#44546f">WORK-114</div>
<div class="a" style="left:393.1px;top:754.1px;width:1.7px;height:24.0px;background:rgba(9,30,66,0.12)"></div>
<div class="a" style="left:409.0px;top:754.1px;width:1.7px;height:24.0px;background:rgba(9,30,66,0.12)"></div>
<div class="a" style="left:440.8px;top:754.1px;width:1.7px;height:24.0px;background:rgba(9,30,66,0.12)"></div>
<div class="a" style="left:442.5px;top:765.7px;width:7px;height:1.7px;background:rgba(9,30,66,0.12)"></div>
<div class="t" style="left:451.0px;top:752.0px;color:#172b4d">Switch to annual license renewal</div>
<div class="ic" style="left:760.7px;top:757.7px"><svg width="16" height="16" viewBox="0 0 16 16"><path d="M2.5 8 L8 4 L13.5 8 M2.5 12 L8 8 L13.5 12" stroke="#f4572f" fill="none" stroke-width="2.1" stroke-linecap="round" stroke-linejoin="round"/></svg></div>
<div class="a" style="left:810.1px;top:757.1px;line-height:16px"><span class="lz" style="background:#e9f2ff;color:#0c66e4">IN PROGRESS</span></div>
<div class="t" style="left:1010.5px;top:752.0px;letter-spacing:0px;color:#172b4d">19w 2h 21m</div>
<div class="t" style="left:1161.0px;top:752.0px;letter-spacing:0.1px;color:#172b4d">1.07h</div>
<div class="a" style="left:1336px;top:757.3000000000001px;width:17.5px;height:17.5px;background:#9f8fef;border-radius:3px"></div>
<div class="ic" style="left:1393.4px;top:758.1px"><svg width="16" height="16" viewBox="0 0 16 16"><defs><clipPath id="cho"><circle cx="8" cy="8" r="8"/></clipPath></defs><g clip-path="url(#cho)"><rect width="16" height="16" fill="#2a2a2a"/><path d="M0 0 H5 Q3 4 4.5 8 Q3.5 12 6 16 H0Z" fill="#e9e9e9"/><path d="M5.5 3.5 Q9 2.5 9.5 6 Q10.5 8 9.5 9.5 Q9 12 6.5 13 Q4.5 10 5 7.5 Z" fill="#d2d2d2"/><path d="M8 6.5 Q9.5 9 8.5 11.5" stroke="#777" stroke-width="0.8" fill="none"/></g></svg></div>
<div class="t" style="left:1414.2px;top:752.0px;color:#172b4d">Hannes Obweger</div>
<div class="a" style="left:1544.4px;top:757.3000000000001px;width:142.79999999999995px;height:18px;overflow:hidden;white-space:nowrap;font-size:14px;display:flex"><span style="display:inline-flex;align-items:center;height:17.5px;padding:0 5px 0 4px;margin-right:7px;background:rgba(9,30,66,0.06);border-radius:3px;white-space:nowrap;color:#172b4d;font-size:13.5px;letter-spacing:-0.15px;-webkit-text-stroke:0.2px currentColor"><span style="display:block;width:12px;height:12px;margin-right:5px"><svg width="12" height="12" viewBox="0 0 12 12" style="display:block"><g stroke="#84b8f0" stroke-width="1.3" stroke-linecap="round"><path d="M6 1 V11 M1.7 3.5 L10.3 8.5 M1.7 8.5 L10.3 3.5"/></g><circle cx="6" cy="6" r="1.6" fill="#cfe3fa"/></svg></span>Broken leg serum</span><span style="display:inline-flex;align-items:center;height:17.5px;padding:0 5px 0 4px;margin-right:7px;background:rgba(9,30,66,0.06);border-radius:3px;white-space:nowrap;color:#172b4d;font-size:13.5px;letter-spacing:-0.15px;-webkit-text-stroke:0.2px currentColor"><span style="display:block;width:12px;height:12px;margin-right:5px"><svg width="12" height="12" viewBox="0 0 12 12" style="display:block"><rect x="0.5" y="0.5" width="11" height="11" rx="2" fill="#34b233"/><rect x="3" y="3" width="6" height="6" fill="#1d2f45"/></svg></span></span></div>
<div class="a" style="left:156px;top:780.1px;width:33.30000000000001px;height:28.0px;background:#f1f2f4;border:1px solid #e2e4e9;border-right:none;border-top:none;border-radius:3px 0 0 3px"></div>
<div class="a" style="left:188.3px;top:780.1px;width:1498.9px;height:28.0px;background:#ffffff"></div>
<div class="a" style="left:188.3px;top:806.8000000000001px;width:1498.9px;height:1.6px;background:rgba(9,30,66,0.065)"></div>
<div class="a" style="left:252.89999999999998px;top:780.1px;width:1.6px;height:28.0px;background:rgba(9,30,66,0.065)"></div>
<div class="a" style="left:377.9px;top:780.1px;width:1.6px;height:28.0px;background:rgba(9,30,66,0.065)"></div>
<div class="a" style="left:736.2px;top:780.1px;width:1.6px;height:28.0px;background:rgba(9,30,66,0.065)"></div>
<div class="a" style="left:800.3000000000001px;top:780.1px;width:1.6px;height:28.0px;background:rgba(9,30,66,0.065)"></div>
<div class="a" style="left:1000.7px;top:780.1px;width:1.6px;height:28.0px;background:rgba(9,30,66,0.065)"></div>
<div class="a" style="left:1153.9px;top:780.1px;width:1.6px;height:28.0px;background:rgba(9,30,66,0.065)"></div>
<div class="a" style="left:1303.7px;top:780.1px;width:1.6px;height:28.0px;background:rgba(9,30,66,0.065)"></div>
<div class="a" style="left:1384.5px;top:780.1px;width:1.6px;height:28.0px;background:rgba(9,30,66,0.065)"></div>
<div class="a" style="left:1535.8px;top:780.1px;width:1.6px;height:28.0px;background:rgba(9,30,66,0.065)"></div>
<div class="ic" style="left:213.8px;top:787.6px"><svg width="14" height="14" viewBox="0 0 14 14"><rect width="14" height="14" rx="2" fill="#3ea6ef"/><path d="M3.5 7.2 L6 9.6 L10.5 4.4" fill="none" stroke="#fff" stroke-width="2.1" stroke-linecap="round" stroke-linejoin="round"/></svg></div>
<div class="t" style="left:262.2px;top:780.0px;color:#44546f">WORK-113</div>
<div class="a" style="left:393.1px;top:782.1px;width:1.7px;height:24.0px;background:rgba(9,30,66,0.12)"></div>
<div class="a" style="left:409.0px;top:782.1px;width:1.7px;height:24.0px;background:rgba(9,30,66,0.12)"></div>
<div class="a" style="left:440.8px;top:782.1px;width:1.7px;height:24.0px;background:rgba(9,30,66,0.12)"></div>
<div class="a" style="left:442.5px;top:793.7px;width:7px;height:1.7px;background:rgba(9,30,66,0.12)"></div>
<div class="t" style="left:451.0px;top:780.0px;color:#172b4d">Register with the Earth Moon Port Authority</div>
<div class="ic" style="left:760.7px;top:785.7px"><svg width="16" height="16" viewBox="0 0 16 16"><path d="M2.5 6 L8 10 L13.5 6" stroke="#1d6cf2" fill="none" stroke-width="2.1" stroke-linecap="round" stroke-linejoin="round"/></svg></div>
<div class="a" style="left:810.1px;top:785.1px;line-height:16px"><span class="lz" style="background:#d3f8e6;color:#1c6b49">DONE</span></div>
<div class="t" style="left:1010.5px;top:780.0px;letter-spacing:0px;color:#172b4d">1w 1d 3h</div>
<div class="t" style="left:1161.0px;top:780.0px;letter-spacing:0.1px;color:#172b4d">168.01h</div>
<div class="a" style="left:1336px;top:785.3000000000001px;width:17.5px;height:17.5px;background:#579dff;border-radius:3px"></div>
<div class="ic" style="left:1393.4px;top:786.1px"><svg width="16" height="16" viewBox="0 0 16 16"><defs><clipPath id="cho"><circle cx="8" cy="8" r="8"/></clipPath></defs><g clip-path="url(#cho)"><rect width="16" height="16" fill="#2a2a2a"/><path d="M0 0 H5 Q3 4 4.5 8 Q3.5 12 6 16 H0Z" fill="#e9e9e9"/><path d="M5.5 3.5 Q9 2.5 9.5 6 Q10.5 8 9.5 9.5 Q9 12 6.5 13 Q4.5 10 5 7.5 Z" fill="#d2d2d2"/><path d="M8 6.5 Q9.5 9 8.5 11.5" stroke="#777" stroke-width="0.8" fill="none"/></g></svg></div>
<div class="t" style="left:1414.2px;top:780.0px;color:#172b4d">Hannes Obweger</div>
<div class="a" style="left:156px;top:808.1px;width:33.30000000000001px;height:28.0px;background:#f1f2f4;border:1px solid #e2e4e9;border-right:none;border-top:none;border-radius:3px 0 0 3px"></div>
<div class="ic" style="left:166px;top:815.3000000000001px"><svg width="12" height="12" viewBox="0 0 12 12"><path d="M3 4.5 L6 7.5 L9 4.5" fill="none" stroke="#2c3e5d" stroke-width="1.8" stroke-linecap="round" stroke-linejoin="round"/></svg></div>
<div class="a" style="left:188.3px;top:808.1px;width:1498.9px;height:28.0px;background:#ffd5d2"></div>
<div class="a" style="left:188.3px;top:834.8000000000001px;width:1498.9px;height:1.6px;background:rgba(9,30,66,0.065)"></div>
<div class="a" style="left:252.89999999999998px;top:808.1px;width:1.6px;height:28.0px;background:rgba(9,30,66,0.065)"></div>
<div class="a" style="left:377.9px;top:808.1px;width:1.6px;height:28.0px;background:rgba(9,30,66,0.065)"></div>
<div class="a" style="left:736.2px;top:808.1px;width:1.6px;height:28.0px;background:rgba(9,30,66,0.065)"></div>
<div class="a" style="left:800.3000000000001px;top:808.1px;width:1.6px;height:28.0px;background:rgba(9,30,66,0.065)"></div>
<div class="a" style="left:1000.7px;top:808.1px;width:1.6px;height:28.0px;background:rgba(9,30,66,0.065)"></div>
<div class="a" style="left:1153.9px;top:808.1px;width:1.6px;height:28.0px;background:rgba(9,30,66,0.065)"></div>
<div class="a" style="left:1303.7px;top:808.1px;width:1.6px;height:28.0px;background:rgba(9,30,66,0.065)"></div>
<div class="a" style="left:1384.5px;top:808.1px;width:1.6px;height:28.0px;background:rgba(9,30,66,0.065)"></div>
<div class="a" style="left:1535.8px;top:808.1px;width:1.6px;height:28.0px;background:rgba(9,30,66,0.065)"></div>
<div class="ic" style="left:213.8px;top:815.6px"><svg width="14" height="14" viewBox="0 0 14 14"><rect width="14" height="14" rx="2" fill="#ec3b2e"/><circle cx="7" cy="7" r="3.4" fill="#fff"/></svg></div>
<div class="t" style="left:262.2px;top:808.0px;color:#a34a40">WORK-112</div>
<div class="a" style="left:393.1px;top:810.1px;width:1.7px;height:24.0px;background:rgba(9,30,66,0.12)"></div>
<div class="a" style="left:409.0px;top:810.1px;width:1.7px;height:24.0px;background:rgba(9,30,66,0.12)"></div>
<div class="a" style="left:440.8px;top:810.1px;width:1.7px;height:12.0px;background:rgba(9,30,66,0.12)"></div>
<div class="a" style="left:442.5px;top:821.7px;width:7px;height:1.7px;background:rgba(9,30,66,0.12)"></div>
<div class="t" style="left:451.0px;top:808.0px;color:#7f2c24">Booking app incident</div>
<div class="ic" style="left:760.7px;top:813.7px"><svg width="16" height="16" viewBox="0 0 16 16"><path d="M2.5 6 L8 10 L13.5 6" stroke="#1d6cf2" fill="none" stroke-width="2.1" stroke-linecap="round" stroke-linejoin="round"/></svg></div>
<div class="a" style="left:810.1px;top:813.1px;line-height:16px"><span class="lz" style="background:#d3f8e6;color:#1c6b49">DONE</span></div>
<div class="t" style="left:1010.5px;top:808.0px;letter-spacing:0px;color:#7f2c24">20w 1d 23h 32m</div>
<div class="t" style="left:1161.0px;top:808.0px;letter-spacing:0.1px;color:#7f2c24">215.56h</div>
<div class="a" style="left:1336px;top:813.3000000000001px;width:17.5px;height:17.5px;background:#6cc3e0;border-radius:3px"></div>
<div class="ic" style="left:1393.4px;top:814.1px"><svg width="16" height="16" viewBox="0 0 16 16"><defs><clipPath id="cho"><circle cx="8" cy="8" r="8"/></clipPath></defs><g clip-path="url(#cho)"><rect width="16" height="16" fill="#2a2a2a"/><path d="M0 0 H5 Q3 4 4.5 8 Q3.5 12 6 16 H0Z" fill="#e9e9e9"/><path d="M5.5 3.5 Q9 2.5 9.5 6 Q10.5 8 9.5 9.5 Q9 12 6.5 13 Q4.5 10 5 7.5 Z" fill="#d2d2d2"/><path d="M8 6.5 Q9.5 9 8.5 11.5" stroke="#777" stroke-width="0.8" fill="none"/></g></svg></div>
<div class="t" style="left:1414.2px;top:808.0px;color:#7f2c24">Hannes Obweger</div>
<div class="a" style="left:1544.4px;top:813.3000000000001px;width:142.79999999999995px;height:18px;overflow:hidden;white-space:nowrap;font-size:14px;display:flex"><span style="display:inline-flex;align-items:center;height:17.5px;padding:0 5px 0 4px;margin-right:7px;background:rgba(9,30,66,0.06);border-radius:3px;white-space:nowrap;color:#7f2c24;font-size:13.5px;letter-spacing:-0.15px;-webkit-text-stroke:0.2px currentColor"><span style="display:block;width:12px;height:12px;margin-right:5px"><svg width="12" height="12" viewBox="0 0 12 12" style="display:block"><g stroke="#84b8f0" stroke-width="1.3" stroke-linecap="round"><path d="M6 1 V11 M1.7 3.5 L10.3 8.5 M1.7 8.5 L10.3 3.5"/></g><circle cx="6" cy="6" r="1.6" fill="#cfe3fa"/></svg></span>Broken leg serum</span></div>
<div class="a" style="left:172px;top:836.1px;width:17.30000000000001px;height:28.0px;background:#f1f2f4;border:1px solid #e2e4e9;border-right:none;border-top:none;border-radius:3px 0 0 3px"></div>
<div class="a" style="left:188.3px;top:836.1px;width:1498.9px;height:28.0px;background:#ffffff"></div>
<div class="a" style="left:188.3px;top:862.8000000000001px;width:1498.9px;height:1.6px;background:rgba(9,30,66,0.065)"></div>
<div class="a" style="left:252.89999999999998px;top:836.1px;width:1.6px;height:28.0px;background:rgba(9,30,66,0.065)"></div>
<div class="a" style="left:377.9px;top:836.1px;width:1.6px;height:28.0px;background:rgba(9,30,66,0.065)"></div>
<div class="a" style="left:736.2px;top:836.1px;width:1.6px;height:28.0px;background:rgba(9,30,66,0.065)"></div>
<div class="a" style="left:800.3000000000001px;top:836.1px;width:1.6px;height:28.0px;background:rgba(9,30,66,0.065)"></div>
<div class="a" style="left:1000.7px;top:836.1px;width:1.6px;height:28.0px;background:rgba(9,30,66,0.065)"></div>
<div class="a" style="left:1153.9px;top:836.1px;width:1.6px;height:28.0px;background:rgba(9,30,66,0.065)"></div>
<div class="a" style="left:1303.7px;top:836.1px;width:1.6px;height:28.0px;background:rgba(9,30,66,0.065)"></div>
<div class="a" style="left:1384.5px;top:836.1px;width:1.6px;height:28.0px;background:rgba(9,30,66,0.065)"></div>
<div class="a" style="left:1535.8px;top:836.1px;width:1.6px;height:28.0px;background:rgba(9,30,66,0.065)"></div>
<div class="ic" style="left:213.8px;top:843.6px"><svg width="14" height="14" viewBox="0 0 14 14"><rect width="14" height="14" rx="2" fill="#3ea6ef"/><rect x="2.8" y="2.8" width="5.4" height="5.4" rx="0.8" fill="none" stroke="#fff" stroke-width="1.4"/><rect x="5.8" y="5.8" width="5.4" height="5.4" rx="0.8" fill="#fff"/></svg></div>
<div class="t" style="left:262.2px;top:836.0px;color:#44546f">WORK-302</div>
<div class="a" style="left:393.1px;top:838.1px;width:1.7px;height:24.0px;background:rgba(9,30,66,0.12)"></div>
<div class="a" style="left:409.0px;top:838.1px;width:1.7px;height:24.0px;background:rgba(9,30,66,0.12)"></div>
<div class="a" style="left:456.70000000000005px;top:838.1px;width:1.7px;height:24.0px;background:rgba(9,30,66,0.12)"></div>
<div class="a" style="left:458.40000000000003px;top:849.7px;width:7px;height:1.7px;background:rgba(9,30,66,0.12)"></div>
<div class="t" style="left:466.9px;top:836.0px;color:#172b4d">Refuel oxygen tanks</div>
<div class="ic" style="left:760.7px;top:841.7px"><svg width="16" height="16" viewBox="0 0 16 16"><path d="M2.5 8 L8 4 L13.5 8 M2.5 12 L8 8 L13.5 12" stroke="#f4572f" fill="none" stroke-width="2.1" stroke-linecap="round" stroke-linejoin="round"/></svg></div>
<div class="a" style="left:810.1px;top:841.1px;line-height:16px"><span class="lz" style="background:#d3f8e6;color:#1c6b49">DONE</span></div>
<div class="t" style="left:1010.5px;top:836.0px;letter-spacing:0px;color:#172b4d">69w 3d 7h 29m</div>
<div class="t" style="left:1161.0px;top:836.0px;letter-spacing:0.1px;color:#172b4d">403.49h</div>
<div class="a" style="left:1336px;top:841.3000000000001px;width:17.5px;height:17.5px;background:#9f8fef;border-radius:3px"></div>
<div class="ic" style="left:1393.4px;top:842.1px"><svg width="16" height="16" viewBox="0 0 16 16"><defs><clipPath id="cho"><circle cx="8" cy="8" r="8"/></clipPath></defs><g clip-path="url(#cho)"><rect width="16" height="16" fill="#2a2a2a"/><path d="M0 0 H5 Q3 4 4.5 8 Q3.5 12 6 16 H0Z" fill="#e9e9e9"/><path d="M5.5 3.5 Q9 2.5 9.5 6 Q10.5 8 9.5 9.5 Q9 12 6.5 13 Q4.5 10 5 7.5 Z" fill="#d2d2d2"/><path d="M8 6.5 Q9.5 9 8.5 11.5" stroke="#777" stroke-width="0.8" fill="none"/></g></svg></div>
<div class="t" style="left:1414.2px;top:836.0px;color:#172b4d">Hannes Obweger</div>
<div class="a" style="left:1544.4px;top:841.3000000000001px;width:142.79999999999995px;height:18px;overflow:hidden;white-space:nowrap;font-size:14px;display:flex"><span style="display:inline-flex;align-items:center;height:17.5px;padding:0 5px 0 4px;margin-right:7px;background:rgba(9,30,66,0.06);border-radius:3px;white-space:nowrap;color:#172b4d;font-size:13.5px;letter-spacing:-0.15px;-webkit-text-stroke:0.2px currentColor"><span style="display:block;width:12px;height:12px;margin-right:5px"><svg width="12" height="12" viewBox="0 0 12 12" style="display:block"><rect x="0.5" y="0.5" width="11" height="11" rx="2" fill="#34b233"/><rect x="3" y="3" width="6" height="6" fill="#1d2f45"/></svg></span>Cognition amplifier</span></div>
<div class="a" style="left:172px;top:864.1px;width:17.30000000000001px;height:28.0px;background:#f1f2f4;border:1px solid #e2e4e9;border-right:none;border-top:none;border-radius:3px 0 0 3px"></div>
<div class="a" style="left:188.3px;top:864.1px;width:1498.9px;height:28.0px;background:#ffffff"></div>
<div class="a" style="left:188.3px;top:890.8000000000001px;width:1498.9px;height:1.6px;background:rgba(9,30,66,0.065)"></div>
<div class="a" style="left:252.89999999999998px;top:864.1px;width:1.6px;height:28.0px;background:rgba(9,30,66,0.065)"></div>
<div class="a" style="left:377.9px;top:864.1px;width:1.6px;height:28.0px;background:rgba(9,30,66,0.065)"></div>
<div class="a" style="left:736.2px;top:864.1px;width:1.6px;height:28.0px;background:rgba(9,30,66,0.065)"></div>
<div class="a" style="left:800.3000000000001px;top:864.1px;width:1.6px;height:28.0px;background:rgba(9,30,66,0.065)"></div>
<div class="a" style="left:1000.7px;top:864.1px;width:1.6px;height:28.0px;background:rgba(9,30,66,0.065)"></div>
<div class="a" style="left:1153.9px;top:864.1px;width:1.6px;height:28.0px;background:rgba(9,30,66,0.065)"></div>
<div class="a" style="left:1303.7px;top:864.1px;width:1.6px;height:28.0px;background:rgba(9,30,66,0.065)"></div>
<div class="a" style="left:1384.5px;top:864.1px;width:1.6px;height:28.0px;background:rgba(9,30,66,0.065)"></div>
<div class="a" style="left:1535.8px;top:864.1px;width:1.6px;height:28.0px;background:rgba(9,30,66,0.065)"></div>
<div class="ic" style="left:213.8px;top:871.6px"><svg width="14" height="14" viewBox="0 0 14 14"><rect width="14" height="14" rx="2" fill="#3ea6ef"/><rect x="2.8" y="2.8" width="5.4" height="5.4" rx="0.8" fill="none" stroke="#fff" stroke-width="1.4"/><rect x="5.8" y="5.8" width="5.4" height="5.4" rx="0.8" fill="#fff"/></svg></div>
<div class="t" style="left:262.2px;top:864.0px;color:#44546f">WORK-300</div>
<div class="a" style="left:393.1px;top:866.1px;width:1.7px;height:24.0px;background:rgba(9,30,66,0.12)"></div>
<div class="a" style="left:409.0px;top:866.1px;width:1.7px;height:24.0px;background:rgba(9,30,66,0.12)"></div>
<div class="a" style="left:456.70000000000005px;top:866.1px;width:1.7px;height:24.0px;background:rgba(9,30,66,0.12)"></div>
<div class="a" style="left:458.40000000000003px;top:877.7px;width:7px;height:1.7px;background:rgba(9,30,66,0.12)"></div>
<div class="t" style="left:466.9px;top:864.0px;color:#172b4d">Create tags</div>
<div class="ic" style="left:760.7px;top:869.7px"><svg width="16" height="16" viewBox="0 0 16 16"><path d="M2.5 8 L8 4 L13.5 8 M2.5 12 L8 8 L13.5 12" stroke="#f4572f" fill="none" stroke-width="2.1" stroke-linecap="round" stroke-linejoin="round"/></svg></div>
<div class="a" style="left:810.1px;top:869.1px;line-height:16px"><span class="lz" style="background:#ebecf0;color:#44546f">TO DO</span></div>
<div class="t" style="left:1010.5px;top:864.0px;letter-spacing:0px;color:#172b4d">12w 1h 43m</div>
<div class="t" style="left:1161.0px;top:864.0px;letter-spacing:0.1px;color:#172b4d">0.01h</div>
<div class="ic" style="left:1393.4px;top:870.1px"><svg width="16" height="16" viewBox="0 0 16 16"><defs><clipPath id="cho"><circle cx="8" cy="8" r="8"/></clipPath></defs><g clip-path="url(#cho)"><rect width="16" height="16" fill="#2a2a2a"/><path d="M0 0 H5 Q3 4 4.5 8 Q3.5 12 6 16 H0Z" fill="#e9e9e9"/><path d="M5.5 3.5 Q9 2.5 9.5 6 Q10.5 8 9.5 9.5 Q9 12 6.5 13 Q4.5 10 5 7.5 Z" fill="#d2d2d2"/><path d="M8 6.5 Q9.5 9 8.5 11.5" stroke="#777" stroke-width="0.8" fill="none"/></g></svg></div>
<div class="t" style="left:1414.2px;top:864.0px;color:#172b4d">Hannes Obweger</div>
<div class="a" style="left:1544.4px;top:869.3000000000001px;width:142.79999999999995px;height:18px;overflow:hidden;white-space:nowrap;font-size:14px;display:flex"><span style="display:inline-flex;align-items:center;height:17.5px;padding:0 5px 0 4px;margin-right:7px;background:rgba(9,30,66,0.06);border-radius:3px;white-space:nowrap;color:#172b4d;font-size:13.5px;letter-spacing:-0.15px;-webkit-text-stroke:0.2px currentColor"><span style="display:block;width:12px;height:12px;margin-right:5px"><svg width="12" height="12" viewBox="0 0 12 12" style="display:block"><g stroke="#84b8f0" stroke-width="1.3" stroke-linecap="round"><path d="M6 1 V11 M1.7 3.5 L10.3 8.5 M1.7 8.5 L10.3 3.5"/></g><circle cx="6" cy="6" r="1.6" fill="#cfe3fa"/></svg></span>Crystallized xanthen</span></div>
<div class="a" style="left:172px;top:892.1px;width:17.30000000000001px;height:28.0px;background:#f1f2f4;border:1px solid #e2e4e9;border-right:none;border-top:none;border-radius:3px 0 0 3px"></div>
<div class="a" style="left:188.3px;top:892.1px;width:1498.9px;height:28.0px;background:#ffffff"></div>
<div class="a" style="left:1384.8px;top:892.1px;width:151.29999999999995px;height:28.0px;background:#f8e6a0"></div>
<div class="a" style="left:188.3px;top:918.8000000000001px;width:1498.9px;height:1.6px;background:rgba(9,30,66,0.065)"></div>
<div class="a" style="left:252.89999999999998px;top:892.1px;width:1.6px;height:28.0px;background:rgba(9,30,66,0.065)"></div>
<div class="a" style="left:377.9px;top:892.1px;width:1.6px;height:28.0px;background:rgba(9,30,66,0.065)"></div>
<div class="a" style="left:736.2px;top:892.1px;width:1.6px;height:28.0px;background:rgba(9,30,66,0.065)"></div>
<div class="a" style="left:800.3000000000001px;top:892.1px;width:1.6px;height:28.0px;background:rgba(9,30,66,0.065)"></div>
<div class="a" style="left:1000.7px;top:892.1px;width:1.6px;height:28.0px;background:rgba(9,30,66,0.065)"></div>
<div class="a" style="left:1153.9px;top:892.1px;width:1.6px;height:28.0px;background:rgba(9,30,66,0.065)"></div>
<div class="a" style="left:1303.7px;top:892.1px;width:1.6px;height:28.0px;background:rgba(9,30,66,0.065)"></div>
<div class="a" style="left:1384.5px;top:892.1px;width:1.6px;height:28.0px;background:rgba(9,30,66,0.065)"></div>
<div class="a" style="left:1535.8px;top:892.1px;width:1.6px;height:28.0px;background:rgba(9,30,66,0.065)"></div>
<div class="ic" style="left:213.8px;top:899.6px"><svg width="14" height="14" viewBox="0 0 14 14"><rect width="14" height="14" rx="2" fill="#3ea6ef"/><rect x="2.8" y="2.8" width="5.4" height="5.4" rx="0.8" fill="none" stroke="#fff" stroke-width="1.4"/><rect x="5.8" y="5.8" width="5.4" height="5.4" rx="0.8" fill="#fff"/></svg></div>
<div class="t" style="left:262.2px;top:892.0px;color:#44546f">WORK-301</div>
<div class="a" style="left:393.1px;top:894.1px;width:1.7px;height:24.0px;background:rgba(9,30,66,0.12)"></div>
<div class="a" style="left:409.0px;top:894.1px;width:1.7px;height:24.0px;background:rgba(9,30,66,0.12)"></div>
<div class="a" style="left:456.70000000000005px;top:894.1px;width:1.7px;height:12.0px;background:rgba(9,30,66,0.12)"></div>
<div class="a" style="left:458.40000000000003px;top:905.7px;width:7px;height:1.7px;background:rgba(9,30,66,0.12)"></div>
<div class="t" style="left:466.9px;top:892.0px;color:#172b4d">Remove secondary rocket</div>
<div class="ic" style="left:760.7px;top:897.7px"><svg width="16" height="16" viewBox="0 0 16 16"><path d="M2.5 4 L8 8 L13.5 4 M2.5 8 L8 12 L13.5 8" stroke="#1d6cf2" fill="none" stroke-width="2.1" stroke-linecap="round" stroke-linejoin="round"/></svg></div>
<div class="a" style="left:810.1px;top:897.1px;line-height:16px"><span class="lz" style="background:#d3f8e6;color:#1c6b49">DONE</span></div>
<div class="t" style="left:1010.5px;top:892.0px;letter-spacing:0px;color:#172b4d">79w 10h 15m</div>
<div class="t" style="left:1161.0px;top:892.0px;letter-spacing:0.1px;color:#172b4d">2014.26h</div>
<div class="ic" style="left:1393.4px;top:898.1px"><svg width="16" height="16" viewBox="0 0 16 16"><circle cx="8" cy="8" r="8" fill="#5e6c84"/><circle cx="8" cy="6.2" r="2.6" fill="#fff"/><path d="M3.2 12.8 Q3.6 9.4 8 9.4 Q12.4 9.4 12.8 12.8 Q10.8 14.6 8 14.6 Q5.2 14.6 3.2 12.8Z" fill="#fff"/></svg></div>
<div class="t" style="left:1414.2px;top:892.0px;color:#a08f55">Unassigned</div>
<div class="a" style="left:1544.4px;top:897.3000000000001px;width:142.79999999999995px;height:18px;overflow:hidden;white-space:nowrap;font-size:14px;display:flex"><span style="display:inline-flex;align-items:center;height:17.5px;padding:0 5px 0 4px;margin-right:7px;background:rgba(9,30,66,0.06);border-radius:3px;white-space:nowrap;color:#172b4d;font-size:13.5px;letter-spacing:-0.15px;-webkit-text-stroke:0.2px currentColor"><span style="display:block;width:12px;height:12px;margin-right:5px"><svg width="12" height="12" viewBox="0 0 12 12" style="display:block"><rect x="0.5" y="0.5" width="11" height="11" rx="2" fill="#34b233"/><rect x="3" y="3" width="6" height="6" fill="#1d2f45"/></svg></span>Freeze ray</span></div>
<div class="a" style="left:108px;top:920.1px;width:81.30000000000001px;height:28.0px;background:#f1f2f4;border:1px solid #e2e4e9;border-right:none;border-top:none;border-radius:3px 0 0 3px"></div>
<div class="ic" style="left:118px;top:927.3000000000001px"><svg width="12" height="12" viewBox="0 0 12 12"><path d="M3 4.5 L6 7.5 L9 4.5" fill="none" stroke="#2c3e5d" stroke-width="1.8" stroke-linecap="round" stroke-linejoin="round"/></svg></div>
<div class="a" style="left:188.3px;top:920.1px;width:1498.9px;height:28.0px;background:#ffffff"></div>
<div class="a" style="left:188.3px;top:946.8000000000001px;width:1498.9px;height:1.6px;background:rgba(9,30,66,0.065)"></div>
<div class="a" style="left:252.89999999999998px;top:920.1px;width:1.6px;height:28.0px;background:rgba(9,30,66,0.065)"></div>
<div class="a" style="left:377.9px;top:920.1px;width:1.6px;height:28.0px;background:rgba(9,30,66,0.065)"></div>
<div class="a" style="left:736.2px;top:920.1px;width:1.6px;height:28.0px;background:rgba(9,30,66,0.065)"></div>
<div class="a" style="left:800.3000000000001px;top:920.1px;width:1.6px;height:28.0px;background:rgba(9,30,66,0.065)"></div>
<div class="a" style="left:1000.7px;top:920.1px;width:1.6px;height:28.0px;background:rgba(9,30,66,0.065)"></div>
<div class="a" style="left:1153.9px;top:920.1px;width:1.6px;height:28.0px;background:rgba(9,30,66,0.065)"></div>
<div class="a" style="left:1303.7px;top:920.1px;width:1.6px;height:28.0px;background:rgba(9,30,66,0.065)"></div>
<div class="a" style="left:1384.5px;top:920.1px;width:1.6px;height:28.0px;background:rgba(9,30,66,0.065)"></div>
<div class="a" style="left:1535.8px;top:920.1px;width:1.6px;height:28.0px;background:rgba(9,30,66,0.065)"></div>
<div class="ic" style="left:213.8px;top:927.6px"><svg width="14" height="14" viewBox="0 0 14 14"><rect x="0" y="0" width="14" height="14" rx="2" fill="#8590a2"/><rect x="3.8" y="3.8" width="6.4" height="6.4" fill="#fff"/></svg></div>
<div class="t" style="left:262.2px;top:920.0px;color:#44546f">WORK-161</div>
<div class="a" style="left:393.1px;top:922.1px;width:1.7px;height:24.0px;background:rgba(9,30,66,0.12)"></div>
<div class="a" style="left:409.0px;top:922.1px;width:1.7px;height:12.0px;background:rgba(9,30,66,0.12)"></div>
<div class="a" style="left:410.7px;top:933.7px;width:7px;height:1.7px;background:rgba(9,30,66,0.12)"></div>
<div class="t" style="left:419.2px;top:920.0px;color:#172b4d">Blackbriar</div>
<div class="ic" style="left:760.7px;top:925.7px"><svg width="16" height="16" viewBox="0 0 16 16"><path d="M2.5 10.5 L8 6.5 L13.5 10.5" stroke="#f4572f" fill="none" stroke-width="2.1" stroke-linecap="round" stroke-linejoin="round"/></svg></div>
<div class="a" style="left:810.1px;top:925.1px;line-height:16px"><span class="lz" style="background:#e9f2ff;color:#0c66e4">IN PROGRESS</span></div>
<div class="t" style="left:1010.5px;top:920.0px;letter-spacing:0px;color:#172b4d">72w 7h 8m</div>
<div class="t" style="left:1161.0px;top:920.0px;letter-spacing:0.1px;color:#172b4d">8504.15h</div>
<div class="a" style="left:1336px;top:925.3000000000001px;width:17.5px;height:17.5px;background:#1f845a;border-radius:3px"></div>
<div class="ic" style="left:1393.4px;top:926.1px"><svg width="16" height="16" viewBox="0 0 16 16"><defs><clipPath id="cdf"><circle cx="8" cy="8" r="8"/></clipPath></defs><g clip-path="url(#cdf)"><rect width="16" height="16" fill="#efe6e0"/><path d="M0 9 Q3 7 5 11 L5 16 L0 16Z M16 9 Q13 7 11 11 L11 16 L16 16Z" fill="#1c1b22"/><ellipse cx="8" cy="8.6" rx="4.4" ry="6" fill="#d4916f"/><path d="M3.8 6.5 Q4.2 1.6 8 1.6 Q11.8 1.6 12.2 6.5 Q10.5 4 8 4.2 Q5.5 4 3.8 6.5Z" fill="#8a5636"/></g></svg></div>
<div class="t" style="left:1414.2px;top:920.0px;color:#172b4d">Daniel Franz</div>
<div class="a" style="left:124px;top:948.1px;width:65.30000000000001px;height:28.0px;background:#f1f2f4;border:1px solid #e2e4e9;border-right:none;border-top:none;border-radius:3px 0 0 3px"></div>
<div class="ic" style="left:134px;top:955.3000000000001px"><svg width="12" height="12" viewBox="0 0 12 12"><path d="M3 4.5 L6 7.5 L9 4.5" fill="none" stroke="#2c3e5d" stroke-width="1.8" stroke-linecap="round" stroke-linejoin="round"/></svg></div>
<div class="a" style="left:188.3px;top:948.1px;width:1498.9px;height:28.0px;background:#f1f2f4;border-bottom:1px solid #e2e4e9"></div>
<div class="a" style="left:736.5px;top:948.1px;width:1px;height:28.0px;background:#e2e4e9"></div>
<div class="a" style="left:800.6px;top:948.1px;width:1px;height:28.0px;background:#e2e4e9"></div>
<div class="a" style="left:1001.0px;top:948.1px;width:1px;height:28.0px;background:#e2e4e9"></div>
<div class="a" style="left:1154.2px;top:948.1px;width:1px;height:28.0px;background:#e2e4e9"></div>
<div class="a" style="left:1304.0px;top:948.1px;width:1px;height:28.0px;background:#e2e4e9"></div>
<div class="a" style="left:1384.8px;top:948.1px;width:1px;height:28.0px;background:#e2e4e9"></div>
<div class="a" style="left:1536.1px;top:948.1px;width:1px;height:28.0px;background:#e2e4e9"></div>
<div class="t" style="left:196.6px;top:949.3000000000001px;font-weight:bold;font-size:14px;color:#172b4d">Project</div>
<svg class="ic" style="left:251.7px;top:953.9px" width="16.5" height="16.5" viewBox="0 0 16 16"><rect width="16" height="16" rx="3" fill="#5a46c8"/><rect x="6.6" y="1.5" width="2.8" height="3" fill="#3fe3f0"/><circle cx="8" cy="9.4" r="4.9" fill="#fff"/><path d="M4 9.8 Q8 8.2 12 9.8 A4 4 0 0 1 4 9.8Z" fill="#f2280f"/></svg>
<div class="t" style="left:272.5px;top:949.3000000000001px;color:#44546f">Fine work</div>
<div class="t" style="left:338.8px;top:949.3000000000001px;color:#626f86">3 issues</div>
<div class="t" style="left:396.4px;top:949.3000000000001px;color:#626f86">19 total</div>
<div class="t" style="left:746.0px;top:948.9px;color:#626f86">3</div>
<div class="a" style="left:810.1px;top:954.2px;width:184px;height:3.4px;background:#dfe1e6;border-radius:2px"></div>
<div class="a" style="left:810.1px;top:954.2px;width:58.9px;height:3.4px;background:#20b26a;border-radius:2px"></div>
<div class="a" style="left:810.1px;top:957.4px;line-height:16px;font-size:11px;color:#626f86;white-space:nowrap;-webkit-text-stroke:0.15px #626f86">32% done</div>
<div class="a" style="left:810.1px;top:957.4px;width:184px;text-align:right;line-height:16px;font-size:11px;color:#626f86;white-space:nowrap;-webkit-text-stroke:0.15px #626f86">68% remaining</div>
<div class="t" style="left:1010.5px;top:948.9px;color:#626f86">0m - 87w 6h 53m</div>
<div class="t" style="left:1162.0px;top:948.9px;color:#626f86">0.01h - 12913h</div>
<div class="t" style="left:1313.5px;top:948.9px;color:#626f86">6</div>
<div class="t" style="left:1394.3px;top:948.9px;color:#626f86">2</div>
<div class="t" style="left:1545.6px;top:948.9px;color:#626f86">5</div>
<div class="a" style="left:140px;top:976.1px;width:49.30000000000001px;height:28.0px;background:#f1f2f4;border:1px solid #e2e4e9;border-right:none;border-top:none;border-radius:3px 0 0 3px"></div>
<div class="a" style="left:188.3px;top:976.1px;width:1498.9px;height:28.0px;background:#dfd8fd"></div>
<div class="a" style="left:188.3px;top:1002.8000000000001px;width:1498.9px;height:1.6px;background:rgba(9,30,66,0.065)"></div>
<div class="a" style="left:252.89999999999998px;top:976.1px;width:1.6px;height:28.0px;background:rgba(9,30,66,0.065)"></div>
<div class="a" style="left:377.9px;top:976.1px;width:1.6px;height:28.0px;background:rgba(9,30,66,0.065)"></div>
<div class="a" style="left:736.2px;top:976.1px;width:1.6px;height:28.0px;background:rgba(9,30,66,0.065)"></div>
<div class="a" style="left:800.3000000000001px;top:976.1px;width:1.6px;height:28.0px;background:rgba(9,30,66,0.065)"></div>
<div class="a" style="left:1000.7px;top:976.1px;width:1.6px;height:28.0px;background:rgba(9,30,66,0.065)"></div>
<div class="a" style="left:1153.9px;top:976.1px;width:1.6px;height:28.0px;background:rgba(9,30,66,0.065)"></div>
<div class="a" style="left:1303.7px;top:976.1px;width:1.6px;height:28.0px;background:rgba(9,30,66,0.065)"></div>
<div class="a" style="left:1384.5px;top:976.1px;width:1.6px;height:28.0px;background:rgba(9,30,66,0.065)"></div>
<div class="a" style="left:1535.8px;top:976.1px;width:1.6px;height:28.0px;background:rgba(9,30,66,0.065)"></div>
<div class="ic" style="left:213.8px;top:983.6px"><svg width="14" height="14" viewBox="0 0 14 14"><rect width="14" height="14" rx="2" fill="#8f4fe0"/><path d="M9.2 2.2 L3.6 7.9 H6.6 L4.8 11.8 L10.4 6.1 H7.4 Z" fill="#fff"/></svg></div>
<div class="t" style="left:262.2px;top:976.0px;color:#5f5196">WORK-149</div>
<div class="a" style="left:393.1px;top:978.1px;width:1.7px;height:24.0px;background:rgba(9,30,66,0.12)"></div>
<div class="a" style="left:424.90000000000003px;top:978.1px;width:1.7px;height:24.0px;background:rgba(9,30,66,0.12)"></div>
<div class="a" style="left:426.6px;top:989.7px;width:7px;height:1.7px;background:rgba(9,30,66,0.12)"></div>
<div class="t" style="left:435.09999999999997px;top:976.0px;color:#3b2f78">Planet Express</div>
<div class="ic" style="left:760.7px;top:981.7px"><svg width="16" height="16" viewBox="0 0 16 16"><path d="M2.5 8 L8 4 L13.5 8 M2.5 12 L8 8 L13.5 12" stroke="#f4572f" fill="none" stroke-width="2.1" stroke-linecap="round" stroke-linejoin="round"/></svg></div>
<div class="a" style="left:810.1px;top:981.1px;line-height:16px"><span class="lz" style="background:#ebecf0;color:#44546f">TO DO</span></div>
<div class="a" style="left:1336px;top:981.3000000000001px;width:17.5px;height:17.5px;background:#227d9b;border-radius:3px"></div>
<div class="ic" style="left:1393.4px;top:982.1px"><svg width="16" height="16" viewBox="0 0 16 16"><defs><clipPath id="cdf"><circle cx="8" cy="8" r="8"/></clipPath></defs><g clip-path="url(#cdf)"><rect width="16" height="16" fill="#efe6e0"/><path d="M0 9 Q3 7 5 11 L5 16 L0 16Z M16 9 Q13 7 11 11 L11 16 L16 16Z" fill="#1c1b22"/><ellipse cx="8" cy="8.6" rx="4.4" ry="6" fill="#d4916f"/><path d="M3.8 6.5 Q4.2 1.6 8 1.6 Q11.8 1.6 12.2 6.5 Q10.5 4 8 4.2 Q5.5 4 3.8 6.5Z" fill="#8a5636"/></g></svg></div>
<div class="t" style="left:1414.2px;top:976.0px;color:#3b2f78">Daniel Franz</div>
<div class="a" style="left:140px;top:1004.1px;width:49.30000000000001px;height:28.0px;background:#f1f2f4;border:1px solid #e2e4e9;border-right:none;border-top:none;border-radius:3px 0 0 3px"></div>
<div class="ic" style="left:150px;top:1011.3000000000001px"><svg width="12" height="12" viewBox="0 0 12 12"><path d="M3 4.5 L6 7.5 L9 4.5" fill="none" stroke="#2c3e5d" stroke-width="1.8" stroke-linecap="round" stroke-linejoin="round"/></svg></div>
<div class="a" style="left:188.3px;top:1004.1px;width:1498.9px;height:28.0px;background:#dfd8fd"></div>
<div class="a" style="left:188.3px;top:1030.8px;width:1498.9px;height:1.6px;background:rgba(9,30,66,0.065)"></div>
<div class="a" style="left:252.89999999999998px;top:1004.1px;width:1.6px;height:28.0px;background:rgba(9,30,66,0.065)"></div>
<div class="a" style="left:377.9px;top:1004.1px;width:1.6px;height:28.0px;background:rgba(9,30,66,0.065)"></div>
<div class="a" style="left:736.2px;top:1004.1px;width:1.6px;height:28.0px;background:rgba(9,30,66,0.065)"></div>
<div class="a" style="left:800.3000000000001px;top:1004.1px;width:1.6px;height:28.0px;background:rgba(9,30,66,0.065)"></div>
<div class="a" style="left:1000.7px;top:1004.1px;width:1.6px;height:28.0px;background:rgba(9,30,66,0.065)"></div>
<div class="a" style="left:1153.9px;top:1004.1px;width:1.6px;height:28.0px;background:rgba(9,30,66,0.065)"></div>
<div class="a" style="left:1303.7px;top:1004.1px;width:1.6px;height:28.0px;background:rgba(9,30,66,0.065)"></div>
<div class="a" style="left:1384.5px;top:1004.1px;width:1.6px;height:28.0px;background:rgba(9,30,66,0.065)"></div>
<div class="a" style="left:1535.8px;top:1004.1px;width:1.6px;height:28.0px;background:rgba(9,30,66,0.065)"></div>
<div class="ic" style="left:213.8px;top:1011.6px"><svg width="14" height="14" viewBox="0 0 14 14"><rect width="14" height="14" rx="2" fill="#8f4fe0"/><path d="M9.2 2.2 L3.6 7.9 H6.6 L4.8 11.8 L10.4 6.1 H7.4 Z" fill="#fff"/></svg></div>
<div class="t" style="left:262.2px;top:1004.0px;color:#5f5196">WORK-143</div>
<div class="a" style="left:393.1px;top:1006.1px;width:1.7px;height:24.0px;background:rgba(9,30,66,0.12)"></div>
<div class="a" style="left:424.90000000000003px;top:1006.1px;width:1.7px;height:24.0px;background:rgba(9,30,66,0.12)"></div>
<div class="a" style="left:426.6px;top:1017.7px;width:7px;height:1.7px;background:rgba(9,30,66,0.12)"></div>
<div class="t" style="left:435.09999999999997px;top:1004.0px;color:#3b2f78">Planet Taxi booking</div>
<div class="ic" style="left:760.7px;top:1009.7px"><svg width="16" height="16" viewBox="0 0 16 16"><path d="M2.5 8 L8 4 L13.5 8 M2.5 12 L8 8 L13.5 12" stroke="#f4572f" fill="none" stroke-width="2.1" stroke-linecap="round" stroke-linejoin="round"/></svg></div>
<div class="a" style="left:810.1px;top:1009.1px;line-height:16px"><span class="lz" style="background:#e9f2ff;color:#0c66e4">IN PROGRESS</span></div>
<div class="t" style="left:1010.5px;top:1004.0px;letter-spacing:0px;color:#3b2f78">6w 4d 17h 21m</div>
<div class="t" style="left:1161.0px;top:1004.0px;letter-spacing:0.1px;color:#3b2f78">1497.7h</div>
<div class="a" style="left:1336px;top:1009.3000000000001px;width:17.5px;height:17.5px;background:#f5cd00;border-radius:3px"></div>
<div class="ic" style="left:1393.4px;top:1010.1px"><svg width="16" height="16" viewBox="0 0 16 16"><defs><clipPath id="cdf"><circle cx="8" cy="8" r="8"/></clipPath></defs><g clip-path="url(#cdf)"><rect width="16" height="16" fill="#efe6e0"/><path d="M0 9 Q3 7 5 11 L5 16 L0 16Z M16 9 Q13 7 11 11 L11 16 L16 16Z" fill="#1c1b22"/><ellipse cx="8" cy="8.6" rx="4.4" ry="6" fill="#d4916f"/><path d="M3.8 6.5 Q4.2 1.6 8 1.6 Q11.8 1.6 12.2 6.5 Q10.5 4 8 4.2 Q5.5 4 3.8 6.5Z" fill="#8a5636"/></g></svg></div>
<div class="t" style="left:1414.2px;top:1004.0px;color:#3b2f78">Daniel Franz</div>
<div class="a" style="left:156px;top:1032.1px;width:33.30000000000001px;height:28.0px;background:#f1f2f4;border:1px solid #e2e4e9;border-right:none;border-top:none;border-radius:3px 0 0 3px"></div>
<div class="a" style="left:188.3px;top:1032.1px;width:1498.9px;height:28.0px;background:#ffd5d2"></div>
<div class="a" style="left:1384.8px;top:1032.1px;width:151.29999999999995px;height:28.0px;background:#f8e6a0"></div>
<div class="a" style="left:188.3px;top:1058.8px;width:1498.9px;height:1.6px;background:rgba(9,30,66,0.065)"></div>
<div class="a" style="left:252.89999999999998px;top:1032.1px;width:1.6px;height:28.0px;background:rgba(9,30,66,0.065)"></div>
<div class="a" style="left:377.9px;top:1032.1px;width:1.6px;height:28.0px;background:rgba(9,30,66,0.065)"></div>
<div class="a" style="left:736.2px;top:1032.1px;width:1.6px;height:28.0px;background:rgba(9,30,66,0.065)"></div>
<div class="a" style="left:800.3000000000001px;top:1032.1px;width:1.6px;height:28.0px;background:rgba(9,30,66,0.065)"></div>
<div class="a" style="left:1000.7px;top:1032.1px;width:1.6px;height:28.0px;background:rgba(9,30,66,0.065)"></div>
<div class="a" style="left:1153.9px;top:1032.1px;width:1.6px;height:28.0px;background:rgba(9,30,66,0.065)"></div>
<div class="a" style="left:1303.7px;top:1032.1px;width:1.6px;height:28.0px;background:rgba(9,30,66,0.065)"></div>
<div class="a" style="left:1384.5px;top:1032.1px;width:1.6px;height:28.0px;background:rgba(9,30,66,0.065)"></div>
<div class="a" style="left:1535.8px;top:1032.1px;width:1.6px;height:28.0px;background:rgba(9,30,66,0.065)"></div>
<div class="ic" style="left:213.8px;top:1039.6px"><svg width="14" height="14" viewBox="0 0 14 14"><rect width="14" height="14" rx="2" fill="#ec3b2e"/><circle cx="7" cy="7" r="3.4" fill="#fff"/></svg></div>
<div class="t" style="left:262.2px;top:1032.0px;color:#a34a40">WORK-106</div>
<div class="a" style="left:393.1px;top:1034.1px;width:1.7px;height:24.0px;background:rgba(9,30,66,0.12)"></div>
<div class="a" style="left:424.90000000000003px;top:1034.1px;width:1.7px;height:24.0px;background:rgba(9,30,66,0.12)"></div>
<div class="a" style="left:440.8px;top:1034.1px;width:1.7px;height:24.0px;background:rgba(9,30,66,0.12)"></div>
<div class="a" style="left:442.5px;top:1045.6999999999998px;width:7px;height:1.7px;background:rgba(9,30,66,0.12)"></div>
<div class="t" style="left:451.0px;top:1032.0px;color:#7f2c24">Book now button is disabled / unavailablee...</div>
<div class="ic" style="left:760.7px;top:1037.6999999999998px"><svg width="16" height="16" viewBox="0 0 16 16"><path d="M2.5 10.5 L8 6.5 L13.5 10.5" stroke="#f4572f" fill="none" stroke-width="2.1" stroke-linecap="round" stroke-linejoin="round"/></svg></div>
<div class="a" style="left:810.1px;top:1037.1px;line-height:16px"><span class="lz" style="background:#d3f8e6;color:#1c6b49">DONE</span></div>
<div class="t" style="left:1010.5px;top:1032.0px;letter-spacing:0px;color:#7f2c24">0m</div>
<div class="t" style="left:1161.0px;top:1032.0px;letter-spacing:0.1px;color:#7f2c24">0.01h</div>
<div class="a" style="left:1336px;top:1037.3px;width:17.5px;height:17.5px;background:#2abb7f;border-radius:3px"></div>
<div class="ic" style="left:1393.4px;top:1038.1px"><svg width="16" height="16" viewBox="0 0 16 16"><circle cx="8" cy="8" r="8" fill="#5e6c84"/><circle cx="8" cy="6.2" r="2.6" fill="#fff"/><path d="M3.2 12.8 Q3.6 9.4 8 9.4 Q12.4 9.4 12.8 12.8 Q10.8 14.6 8 14.6 Q5.2 14.6 3.2 12.8Z" fill="#fff"/></svg></div>
<div class="t" style="left:1414.2px;top:1032.0px;color:#a08f55">Unassigned</div>
<div class="a" style="left:1544.4px;top:1037.3px;width:142.79999999999995px;height:18px;overflow:hidden;white-space:nowrap;font-size:14px;display:flex"><span style="display:inline-flex;align-items:center;height:17.5px;padding:0 5px 0 4px;margin-right:7px;background:rgba(9,30,66,0.06);border-radius:3px;white-space:nowrap;color:#7f2c24;font-size:13.5px;letter-spacing:-0.15px;-webkit-text-stroke:0.2px currentColor"><span style="display:block;width:12px;height:12px;margin-right:5px"><svg width="12" height="12" viewBox="0 0 12 12" style="display:block"><rect x="0.5" y="0.5" width="11" height="11" rx="2" fill="#34b233"/><rect x="3" y="3" width="6" height="6" fill="#1d2f45"/></svg></span>Memory scanner</span><span style="display:inline-flex;align-items:center;height:17.5px;padding:0 5px 0 4px;margin-right:7px;background:rgba(9,30,66,0.06);border-radius:3px;white-space:nowrap;color:#7f2c24;font-size:13.5px;letter-spacing:-0.15px;-webkit-text-stroke:0.2px currentColor"><span style="display:block;width:12px;height:12px;margin-right:5px"><svg width="12" height="12" viewBox="0 0 12 12" style="display:block"><rect x="0.5" y="0.5" width="11" height="11" rx="2" fill="#34b233"/><rect x="3" y="3" width="6" height="6" fill="#1d2f45"/></svg></span></span></div>
<div class="a" style="left:1687.2px;top:164.4px;width:40.799999999999955px;height:888.8000000000001px;background:#fff"></div>
<div class="a" style="left:1682.7px;top:164.4px;width:4.5px;height:888.8000000000001px;background:linear-gradient(to right,rgba(9,30,66,0),rgba(9,30,66,0.10))"></div>
<div class="a" style="left:54px;top:1053.2px;width:1674px;height:26.799999999999955px;background:#fff;border-top:1.5px solid #e2e4e9;box-shadow:0 -1px 2px rgba(9,30,66,0.06)"></div>
<div class="a" style="left:19.2px;top:1000px;width:3.2px;height:80px;background:#ebecf0"></div>
<svg class="ic" style="left:73px;top:1061.2px" width="14" height="14" viewBox="0 0 14 14"><rect x="1" y="3.5" width="12" height="7" rx="1.8" fill="none" stroke="#626f86" stroke-width="1.5" stroke-linecap="round" stroke-linejoin="round"/></svg>
<div class="a" style="left:91px;top:1054.2px;line-height:27px;font-size:12.5px;color:#44546f;white-space:nowrap">102 issues filtered of 157</div>
<svg class="ic" style="left:243px;top:1060.2px" width="15" height="15" viewBox="0 0 14 14"><path d="M1 3 H5 L6.5 4.5 H13 V12 H1 Z" fill="none" stroke="#626f86" stroke-width="1.5" stroke-linecap="round" stroke-linejoin="round"/></svg>
<div class="a" style="left:262px;top:1054.2px;line-height:27px;font-size:12.5px;color:#44546f;white-space:nowrap">2 projects</div>
<svg class="ic" style="left:327px;top:1060.2px" width="15" height="15" viewBox="0 0 14 14"><path d="M2 2 H12 L10.5 6 L12 12 H2 L3.5 6 Z" fill="none" stroke="#626f86" stroke-width="1.5" stroke-linecap="round" stroke-linejoin="round"/></svg>
<div class="a" style="left:350px;top:1054.2px;line-height:27px;font-size:12.5px;color:#44546f;white-space:nowrap;text-decoration:underline">Scope</div>
<svg class="ic" style="left:1351.8367664877965px;top:1060.5px" width="14" height="14" viewBox="0 0 14 14"><path d="M1 2 L5 7 L1 12 H5 M8 3 H13 M8 6 H13 M8 9 H13 M8 12 H13" fill="none" stroke="#8590a2" stroke-width="1.4" stroke-linecap="round" stroke-linejoin="round"/></svg>
<svg class="ic" style="left:1376.7631988921585px;top:1060.5px" width="14" height="14" viewBox="0 0 14 14"><path d="M1 2 L3 4 L5 2 M1 9 L3 11 L5 9 M8 3 H13 M8 6 H13 M8 9 H13 M8 12 H13" fill="none" stroke="#8590a2" stroke-width="1.4" stroke-linecap="round" stroke-linejoin="round"/></svg>
<svg class="ic" style="left:1400.3048294962784px;top:1060.5px" width="14" height="14" viewBox="0 0 14 14"><path d="M1 2 H5 M3 2 V12 H6 M3 7 H6 M8 6 H13 M8 9 H13 M8 12 H13" fill="none" stroke="#8590a2" stroke-width="1.4" stroke-linecap="round" stroke-linejoin="round"/></svg>
<div class="a" style="left:1421.88506145058px;top:1057.5px;width:20px;height:20px;background:#1d6cf2;border-radius:3px"></div>
<svg class="ic" style="left:1424.88506145058px;top:1060.5px" width="14" height="14" viewBox="0 0 14 14"><path d="M2 2 H5 V5 H2 Z M3.5 5 V12 H7 M3.5 8.5 H7 M8 7 H13 M8 10 H13 M8 12.5 H13" fill="none" stroke="#fff" stroke-width="1.4" stroke-linecap="round" stroke-linejoin="round"/></svg>
<svg class="ic" style="left:1448.7728925047602px;top:1060.5px" width="14" height="14" viewBox="0 0 14 14"><path d="M2 4 H12 M2 7 H12 M2 10 H9" fill="none" stroke="#8590a2" stroke-width="1.4" stroke-linecap="round" stroke-linejoin="round"/></svg>
<div class="a" style="left:1469.1414228838498px;top:1057.5px;width:20px;height:20px;background:#1d6cf2;border-radius:3px"></div>
<svg class="ic" style="left:1472.1414228838498px;top:1060.5px" width="14" height="14" viewBox="0 0 14 14"><path d="M2 2.5 H10 V6 H2 Z M10 4 H12 V8 H7 V9.5 M6 9.5 H8 V13 H6 Z" fill="none" stroke="#fff" stroke-width="1.4" stroke-linecap="round" stroke-linejoin="round"/></svg>
<svg class="ic" style="left:1496.548554613121px;top:1060.5px" width="14" height="14" viewBox="0 0 14 14"><circle cx="6" cy="6" r="4" fill="none" stroke="#8590a2" stroke-width="1.4" stroke-linecap="round" stroke-linejoin="round"/><path d="M9 9 L12.5 12.5" fill="none" stroke="#8590a2" stroke-width="1.4" stroke-linecap="round" stroke-linejoin="round"/></svg>
<svg class="ic" style="left:1520.0901852172408px;top:1060.5px" width="14" height="14" viewBox="0 0 14 14"><path d="M7 1.5 V12.5 M4.5 4 L7 1.5 L9.5 4 M4.5 10 L7 12.5 L9.5 10" fill="none" stroke="#8590a2" stroke-width="1.4" stroke-linecap="round" stroke-linejoin="round"/></svg>
<div class="a" style="left:1541.6704171715423px;top:1057.5px;width:20px;height:20px;background:#1d6cf2;border-radius:3px"></div>
<svg class="ic" style="left:1544.6704171715423px;top:1060.5px" width="14" height="14" viewBox="0 0 14 14"><path d="M2 2 H12 L8.3 7 V12.5 H5.7 V7 Z" fill="#fff"/></svg>
<svg class="ic" style="left:1568.0389475506317px;top:1060.5px" width="14" height="14" viewBox="0 0 14 14"><path d="M1 7 Q7 1 13 7 Q7 13 1 7 Z" fill="none" stroke="#8590a2" stroke-width="1.4" stroke-linecap="round" stroke-linejoin="round"/><circle cx="7" cy="7" r="2" fill="none" stroke="#8590a2" stroke-width="1.4" stroke-linecap="round" stroke-linejoin="round"/></svg>
<div class="a" style="left:1589.6191795049335px;top:1057.5px;width:20px;height:20px;background:#1d6cf2;border-radius:3px"></div>
<svg class="ic" style="left:1592.6191795049335px;top:1060.5px" width="14" height="14" viewBox="0 0 14 14"><path d="M4 1.5 V12.5 M7 1.5 V12.5 M10 1.5 V12.5 M2.5 5 H5.5 M8.5 9 H11.5" fill="none" stroke="#fff" stroke-width="1.4" stroke-linecap="round" stroke-linejoin="round"/></svg>
<div class="a" style="left:1635.7971265362646px;top:1060.5px;width:21.81062835381681px;height:14px;border-radius:7px;background:#dcdfe4"></div>
<div class="a" style="left:1637.7971265362646px;top:1062.5px;width:10px;height:10px;border-radius:5px;background:#fff"></div>
<svg class="ic" style="left:1662.3785701921413px;top:1060.5px" width="14" height="14" viewBox="0 0 14 14"><rect x="1" y="2.5" width="12" height="9" rx="1.5" fill="none" stroke="#8590a2" stroke-width="1.4" stroke-linecap="round" stroke-linejoin="round"/><path d="M1.5 3.5 L7 8 L12.5 3.5" fill="none" stroke="#8590a2" stroke-width="1.4" stroke-linecap="round" stroke-linejoin="round"/></svg>
</div></body></html>
